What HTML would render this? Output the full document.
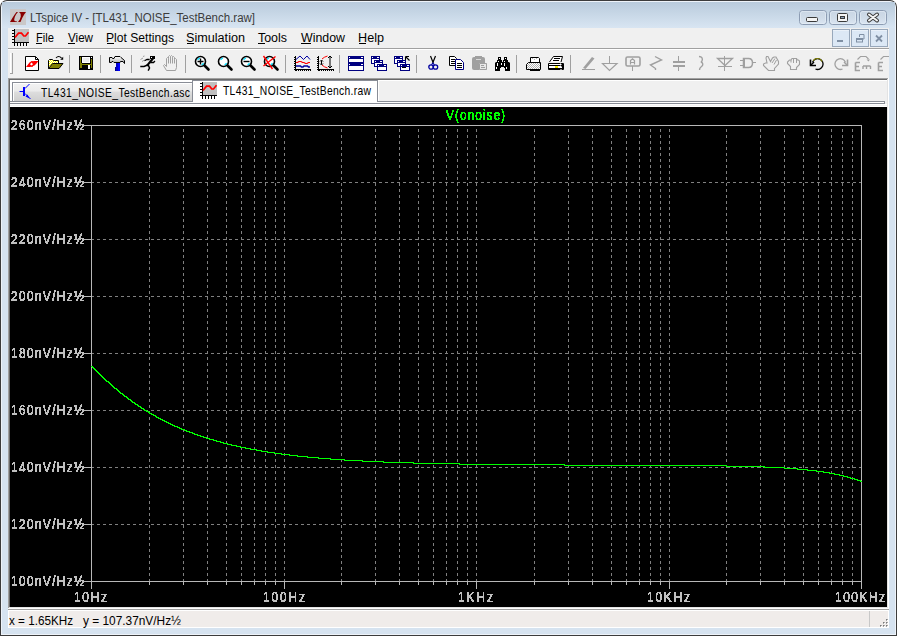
<!DOCTYPE html>
<html><head><meta charset="utf-8"><title>LTspice IV</title>
<style>html,body{margin:0;padding:0;background:#fff;overflow:hidden;width:897px;height:636px}svg{display:block}text{font-family:"Liberation Sans",sans-serif}</style>
</head><body><svg width="897" height="636" viewBox="0 0 897 636"><defs>
<linearGradient id="tg" x1="0" y1="0" x2="0" y2="1"><stop offset="0" stop-color="#b9cbdc"/><stop offset="1" stop-color="#d8e5f2"/></linearGradient>
<linearGradient id="btng" x1="0" y1="0" x2="0" y2="1"><stop offset="0" stop-color="#c9d6e4"/><stop offset="0.5" stop-color="#cfdbe8"/><stop offset="1" stop-color="#dbe6f2"/></linearGradient>
<linearGradient id="tab1g" x1="0" y1="0" x2="0" y2="1"><stop offset="0" stop-color="#f3f3f3"/><stop offset="0.45" stop-color="#ebebeb"/><stop offset="0.5" stop-color="#dddddd"/><stop offset="1" stop-color="#cfcfcf"/></linearGradient>
<filter id="crisp" x="-10%" y="-20%" width="120%" height="140%"><feComponentTransfer><feFuncA type="discrete" tableValues="0 1"/></feComponentTransfer></filter>
<filter id="crisp2" x="-5%" y="-20%" width="110%" height="140%"><feComponentTransfer><feFuncA type="discrete" tableValues="0 0 1 1 1"/></feComponentTransfer></filter>
</defs>
<path d="M0 636 V7 A7 7 0 0 1 7 0 H890 A7 7 0 0 1 897 7 V636 Z" fill="#3c3c3c"/>
<path d="M1 635 V7 A6 6 0 0 1 7 1 H890 A6 6 0 0 1 896 7 V635 Z" fill="#eef3f9"/>
<path d="M2 634 V7 A5 5 0 0 1 7 2 H890 A5 5 0 0 1 895 7 V634 Z" fill="#d6e3f0"/>
<rect x="2" y="2" width="893" height="26" fill="url(#tg)" />
<rect x="10" y="9" width="16" height="16" fill="#cac8c8" />
<path d="M10 22 L13 17 L15 14 L16.5 12 H18 L16 14.5 L14.8 17 L14.2 19.5 L14.6 21 L17 21.5 V22 Z" fill="#880000"/>
<path d="M19 12 H26 L24.2 14.5 L22.5 17.5 L20.5 22 H18 L19.8 19.5 L20.8 16.5 L20.6 13.8 Z" fill="#880000"/>
<text x="30" y="22" font-family="Liberation Sans" font-size="12" font-weight="normal" fill="#3c3c3c" text-anchor="start" textLength="225" lengthAdjust="spacingAndGlyphs" >LTspice IV - [TL431_NOISE_TestBench.raw]</text>
<rect x="799.5" y="10.5" width="27" height="14" rx="3" fill="url(#btng)" stroke="#8c9cb3"/>
<rect x="800.5" y="11.5" width="25" height="12" rx="2" fill="none" stroke="#e6eef7" stroke-opacity="0.6"/>
<rect x="806.5" y="17.5" width="11" height="4" rx="1" fill="#f4f4f4" stroke="#3a3a3a"/>
<rect x="829.5" y="10.5" width="27" height="14" rx="3" fill="url(#btng)" stroke="#8c9cb3"/>
<rect x="830.5" y="11.5" width="25" height="12" rx="2" fill="none" stroke="#e6eef7" stroke-opacity="0.6"/>
<rect x="837.5" y="13.5" width="10" height="8" rx="1" fill="#f4f4f4" stroke="#3a3a3a"/>
<rect x="840.5" y="16.5" width="4" height="2" fill="#8da0b8" stroke="#3a3a3a"/>
<rect x="859.5" y="10.5" width="27" height="14" rx="3" fill="url(#btng)" stroke="#8c9cb3"/>
<rect x="860.5" y="11.5" width="25" height="12" rx="2" fill="none" stroke="#e6eef7" stroke-opacity="0.6"/>
<path d="M869 14.5 L877 20.5 M877 14.5 L869 20.5" stroke="#3a3a3a" stroke-width="4" stroke-linecap="round"/>
<path d="M869 14.5 L877 20.5 M877 14.5 L869 20.5" stroke="#f4f4f4" stroke-width="2" stroke-linecap="round"/>
<rect x="8" y="28" width="881" height="600" fill="#f0f0f0" />
<rect x="15" y="29" width="14" height="13" fill="#c0c0c0" />
<rect x="14" y="29" width="1" height="17" fill="#000" />
<rect x="12" y="30" width="2" height="1" fill="#000" />
<rect x="12" y="33" width="2" height="1" fill="#000" />
<rect x="12" y="36" width="2" height="1" fill="#000" />
<rect x="12" y="39" width="2" height="1" fill="#000" />
<rect x="12" y="42" width="17" height="1" fill="#000" />
<rect x="14" y="43" width="1" height="3" fill="#000" />
<rect x="17" y="43" width="1" height="3" fill="#000" />
<rect x="20" y="43" width="1" height="3" fill="#000" />
<rect x="23" y="43" width="1" height="3" fill="#000" />
<rect x="26" y="43" width="1" height="3" fill="#000" />
<polyline points="15 37.5 18.5 33.2 21.5 33.2 23.8 36 25.5 36 28.5 32.2" fill="none" stroke="#ff0000" stroke-width="1.7"/>
<text x="36" y="42" font-family="Liberation Sans" font-size="12" font-weight="normal" fill="#000" text-anchor="start" textLength="18" lengthAdjust="spacingAndGlyphs" >File</text>
<text x="68" y="42" font-family="Liberation Sans" font-size="12" font-weight="normal" fill="#000" text-anchor="start" textLength="25" lengthAdjust="spacingAndGlyphs" >View</text>
<text x="106" y="42" font-family="Liberation Sans" font-size="12" font-weight="normal" fill="#000" text-anchor="start" textLength="68" lengthAdjust="spacingAndGlyphs" >Plot Settings</text>
<text x="186" y="42" font-family="Liberation Sans" font-size="12" font-weight="normal" fill="#000" text-anchor="start" textLength="59" lengthAdjust="spacingAndGlyphs" >Simulation</text>
<text x="258" y="42" font-family="Liberation Sans" font-size="12" font-weight="normal" fill="#000" text-anchor="start" textLength="29" lengthAdjust="spacingAndGlyphs" >Tools</text>
<text x="301" y="42" font-family="Liberation Sans" font-size="12" font-weight="normal" fill="#000" text-anchor="start" textLength="44" lengthAdjust="spacingAndGlyphs" >Window</text>
<text x="358" y="42" font-family="Liberation Sans" font-size="12" font-weight="normal" fill="#000" text-anchor="start" textLength="26" lengthAdjust="spacingAndGlyphs" >Help</text>
<rect x="36" y="43" width="6" height="1" fill="#000" />
<rect x="68" y="43" width="7" height="1" fill="#000" />
<rect x="107" y="43" width="7" height="1" fill="#000" />
<rect x="187" y="43" width="7" height="1" fill="#000" />
<rect x="258" y="43" width="7" height="1" fill="#000" />
<rect x="301" y="43" width="10" height="1" fill="#000" />
<rect x="359" y="43" width="7" height="1" fill="#000" />
<rect x="832.5" y="29.5" width="17" height="17" fill="#dce8f5" stroke="#98a8bb"/>
<rect x="833" y="30" width="16" height="1" fill="#eaf1f9" />
<rect x="837" y="40" width="6" height="2" fill="#8090a4" />
<rect x="851.5" y="29.5" width="17" height="17" fill="#dce8f5" stroke="#98a8bb"/>
<rect x="852" y="30" width="16" height="1" fill="#eaf1f9" />
<path d="M859.5 37 v-2.5 h4.5 v4.5 h-1.5" fill="none" stroke="#8090a4"/>
<rect x="856.5" y="38.5" width="6" height="3.5" fill="none" stroke="#8090a4"/>
<rect x="856" y="38" width="7" height="2" fill="#8090a4" />
<rect x="870.5" y="29.5" width="17" height="17" fill="#dce8f5" stroke="#98a8bb"/>
<rect x="871" y="30" width="16" height="1" fill="#eaf1f9" />
<path d="M876 35.5 L882 41.5 M882 35.5 L876 41.5" stroke="#8090a4" stroke-width="1.8"/>
<rect x="8" y="48" width="881" height="1" fill="#a0a0a0" />
<rect x="8" y="49" width="881" height="1" fill="#ffffff" />
<rect x="10" y="53" width="1" height="21" fill="#ffffff" />
<rect x="12" y="53" width="1" height="21" fill="#a0a0a0" />
<rect x="10" y="73" width="3" height="1" fill="#a0a0a0" />
<rect x="8" y="78" width="880" height="1" fill="#a0a0a0" />
<rect x="8" y="78" width="1" height="531" fill="#a0a0a0" />
<rect x="9" y="79" width="878" height="1" fill="#696969" />
<rect x="9" y="79" width="1" height="529" fill="#696969" />
<rect x="887" y="79" width="1" height="529" fill="#e3e3e3" />
<rect x="9" y="607" width="879" height="1" fill="#e3e3e3" />
<rect x="888" y="78" width="1" height="531" fill="#ffffff" />
<rect x="8" y="608" width="881" height="1" fill="#ffffff" />
<rect x="10" y="80" width="877" height="27" fill="#f0f0f0" />
<rect x="10" y="101" width="875" height="1" fill="#898d96" />
<rect x="10" y="102" width="874" height="1" fill="#ffffff" />
<rect x="10" y="103" width="875" height="1" fill="#898d96" />
<rect x="884" y="101" width="1" height="3" fill="#898d96" />
<rect x="10" y="104" width="877" height="1" fill="#ffffff" />
<rect x="10" y="105" width="877" height="1" fill="#f4f4f4" />
<rect x="10" y="106" width="877" height="1" fill="#ffffff" />
<rect x="10" y="80" width="182" height="2" fill="#ffffff" />
<rect x="10" y="80" width="2" height="21" fill="#ffffff" />
<rect x="12" y="82" width="181" height="20" fill="#898d96" />
<rect x="13" y="83" width="179" height="18" fill="url(#tab1g)" />
<rect x="13" y="83" width="179" height="1" fill="#ffffff" />
<rect x="13" y="83" width="1" height="18" fill="#ffffff" />
<rect x="193" y="81" width="184" height="22" fill="#ffffff" />
<rect x="192" y="80" width="186" height="1" fill="#898d96" />
<rect x="192" y="80" width="1" height="22" fill="#898d96" />
<rect x="377" y="80" width="1" height="22" fill="#898d96" />
<rect x="378" y="80" width="509" height="1" fill="#ffffff" />
<rect x="378" y="81" width="1" height="20" fill="#ffffff" />
<g stroke="#0000ff" fill="none">
<path d="M19.5 91.5 H24" stroke-width="1"/>
<rect x="23" y="87" width="2" height="9" fill="#0000ff" stroke="none"/>
<path d="M25 88.5 L29.5 84" stroke-width="1"/>
<path d="M25 93.5 L30.5 99" stroke-width="1"/>
</g>
<path d="M29.5 98.5 L25.5 96.5 L27.5 94.5 Z" fill="#0000ff"/>
<g transform="translate(41,97) scale(0.86,1)"><text x="0" y="0" font-family="Liberation Sans" font-size="12" font-weight="normal" fill="#000" text-anchor="start" textLength="173.26" lengthAdjust="spacing" >TL431_NOISE_TestBench.asc</text></g>
<rect x="203" y="82" width="14" height="13" fill="#c0c0c0" />
<rect x="202" y="82" width="1" height="17" fill="#000" />
<rect x="200" y="83" width="2" height="1" fill="#000" />
<rect x="200" y="86" width="2" height="1" fill="#000" />
<rect x="200" y="89" width="2" height="1" fill="#000" />
<rect x="200" y="92" width="2" height="1" fill="#000" />
<rect x="200" y="95" width="17" height="1" fill="#000" />
<rect x="202" y="96" width="1" height="3" fill="#000" />
<rect x="205" y="96" width="1" height="3" fill="#000" />
<rect x="208" y="96" width="1" height="3" fill="#000" />
<rect x="211" y="96" width="1" height="3" fill="#000" />
<rect x="214" y="96" width="1" height="3" fill="#000" />
<polyline points="203 90.5 206.5 86.2 209.5 86.2 211.8 89 213.5 89 216.5 85.2" fill="none" stroke="#ff0000" stroke-width="1.7"/>
<g transform="translate(223,95) scale(0.86,1)"><text x="0" y="0" font-family="Liberation Sans" font-size="12" font-weight="normal" fill="#000" text-anchor="start" textLength="172.09" lengthAdjust="spacing" >TL431_NOISE_TestBench.raw</text></g>
<rect x="10" y="107" width="877" height="500" fill="#000000" />
<path d="M149 129h1v3h-1zM149 135h1v3h-1zM149 141h1v3h-1zM149 147h1v3h-1zM149 153h1v3h-1zM149 159h1v3h-1zM149 165h1v3h-1zM149 171h1v3h-1zM149 177h1v3h-1zM149 183h1v3h-1zM149 189h1v3h-1zM149 195h1v3h-1zM149 201h1v3h-1zM149 207h1v3h-1zM149 213h1v3h-1zM149 219h1v3h-1zM149 225h1v3h-1zM149 231h1v3h-1zM149 237h1v3h-1zM149 243h1v3h-1zM149 249h1v3h-1zM149 255h1v3h-1zM149 261h1v3h-1zM149 267h1v3h-1zM149 273h1v3h-1zM149 279h1v3h-1zM149 285h1v3h-1zM149 291h1v3h-1zM149 297h1v3h-1zM149 303h1v3h-1zM149 309h1v3h-1zM149 315h1v3h-1zM149 321h1v3h-1zM149 327h1v3h-1zM149 333h1v3h-1zM149 339h1v3h-1zM149 345h1v3h-1zM149 351h1v3h-1zM149 357h1v3h-1zM149 363h1v3h-1zM149 369h1v3h-1zM149 375h1v3h-1zM149 381h1v3h-1zM149 387h1v3h-1zM149 393h1v3h-1zM149 399h1v3h-1zM149 405h1v3h-1zM149 411h1v3h-1zM149 417h1v3h-1zM149 423h1v3h-1zM149 429h1v3h-1zM149 435h1v3h-1zM149 441h1v3h-1zM149 447h1v3h-1zM149 453h1v3h-1zM149 459h1v3h-1zM149 465h1v3h-1zM149 471h1v3h-1zM149 477h1v3h-1zM149 483h1v3h-1zM149 489h1v3h-1zM149 495h1v3h-1zM149 501h1v3h-1zM149 507h1v3h-1zM149 513h1v3h-1zM149 519h1v3h-1zM149 525h1v3h-1zM149 531h1v3h-1zM149 537h1v3h-1zM149 543h1v3h-1zM149 549h1v3h-1zM149 555h1v3h-1zM149 561h1v3h-1zM149 567h1v3h-1zM149 573h1v3h-1zM149 579h1v2h-1zM183 129h1v3h-1zM183 135h1v3h-1zM183 141h1v3h-1zM183 147h1v3h-1zM183 153h1v3h-1zM183 159h1v3h-1zM183 165h1v3h-1zM183 171h1v3h-1zM183 177h1v3h-1zM183 183h1v3h-1zM183 189h1v3h-1zM183 195h1v3h-1zM183 201h1v3h-1zM183 207h1v3h-1zM183 213h1v3h-1zM183 219h1v3h-1zM183 225h1v3h-1zM183 231h1v3h-1zM183 237h1v3h-1zM183 243h1v3h-1zM183 249h1v3h-1zM183 255h1v3h-1zM183 261h1v3h-1zM183 267h1v3h-1zM183 273h1v3h-1zM183 279h1v3h-1zM183 285h1v3h-1zM183 291h1v3h-1zM183 297h1v3h-1zM183 303h1v3h-1zM183 309h1v3h-1zM183 315h1v3h-1zM183 321h1v3h-1zM183 327h1v3h-1zM183 333h1v3h-1zM183 339h1v3h-1zM183 345h1v3h-1zM183 351h1v3h-1zM183 357h1v3h-1zM183 363h1v3h-1zM183 369h1v3h-1zM183 375h1v3h-1zM183 381h1v3h-1zM183 387h1v3h-1zM183 393h1v3h-1zM183 399h1v3h-1zM183 405h1v3h-1zM183 411h1v3h-1zM183 417h1v3h-1zM183 423h1v3h-1zM183 429h1v3h-1zM183 435h1v3h-1zM183 441h1v3h-1zM183 447h1v3h-1zM183 453h1v3h-1zM183 459h1v3h-1zM183 465h1v3h-1zM183 471h1v3h-1zM183 477h1v3h-1zM183 483h1v3h-1zM183 489h1v3h-1zM183 495h1v3h-1zM183 501h1v3h-1zM183 507h1v3h-1zM183 513h1v3h-1zM183 519h1v3h-1zM183 525h1v3h-1zM183 531h1v3h-1zM183 537h1v3h-1zM183 543h1v3h-1zM183 549h1v3h-1zM183 555h1v3h-1zM183 561h1v3h-1zM183 567h1v3h-1zM183 573h1v3h-1zM183 579h1v2h-1zM207 129h1v3h-1zM207 135h1v3h-1zM207 141h1v3h-1zM207 147h1v3h-1zM207 153h1v3h-1zM207 159h1v3h-1zM207 165h1v3h-1zM207 171h1v3h-1zM207 177h1v3h-1zM207 183h1v3h-1zM207 189h1v3h-1zM207 195h1v3h-1zM207 201h1v3h-1zM207 207h1v3h-1zM207 213h1v3h-1zM207 219h1v3h-1zM207 225h1v3h-1zM207 231h1v3h-1zM207 237h1v3h-1zM207 243h1v3h-1zM207 249h1v3h-1zM207 255h1v3h-1zM207 261h1v3h-1zM207 267h1v3h-1zM207 273h1v3h-1zM207 279h1v3h-1zM207 285h1v3h-1zM207 291h1v3h-1zM207 297h1v3h-1zM207 303h1v3h-1zM207 309h1v3h-1zM207 315h1v3h-1zM207 321h1v3h-1zM207 327h1v3h-1zM207 333h1v3h-1zM207 339h1v3h-1zM207 345h1v3h-1zM207 351h1v3h-1zM207 357h1v3h-1zM207 363h1v3h-1zM207 369h1v3h-1zM207 375h1v3h-1zM207 381h1v3h-1zM207 387h1v3h-1zM207 393h1v3h-1zM207 399h1v3h-1zM207 405h1v3h-1zM207 411h1v3h-1zM207 417h1v3h-1zM207 423h1v3h-1zM207 429h1v3h-1zM207 435h1v3h-1zM207 441h1v3h-1zM207 447h1v3h-1zM207 453h1v3h-1zM207 459h1v3h-1zM207 465h1v3h-1zM207 471h1v3h-1zM207 477h1v3h-1zM207 483h1v3h-1zM207 489h1v3h-1zM207 495h1v3h-1zM207 501h1v3h-1zM207 507h1v3h-1zM207 513h1v3h-1zM207 519h1v3h-1zM207 525h1v3h-1zM207 531h1v3h-1zM207 537h1v3h-1zM207 543h1v3h-1zM207 549h1v3h-1zM207 555h1v3h-1zM207 561h1v3h-1zM207 567h1v3h-1zM207 573h1v3h-1zM207 579h1v2h-1zM226 129h1v3h-1zM226 135h1v3h-1zM226 141h1v3h-1zM226 147h1v3h-1zM226 153h1v3h-1zM226 159h1v3h-1zM226 165h1v3h-1zM226 171h1v3h-1zM226 177h1v3h-1zM226 183h1v3h-1zM226 189h1v3h-1zM226 195h1v3h-1zM226 201h1v3h-1zM226 207h1v3h-1zM226 213h1v3h-1zM226 219h1v3h-1zM226 225h1v3h-1zM226 231h1v3h-1zM226 237h1v3h-1zM226 243h1v3h-1zM226 249h1v3h-1zM226 255h1v3h-1zM226 261h1v3h-1zM226 267h1v3h-1zM226 273h1v3h-1zM226 279h1v3h-1zM226 285h1v3h-1zM226 291h1v3h-1zM226 297h1v3h-1zM226 303h1v3h-1zM226 309h1v3h-1zM226 315h1v3h-1zM226 321h1v3h-1zM226 327h1v3h-1zM226 333h1v3h-1zM226 339h1v3h-1zM226 345h1v3h-1zM226 351h1v3h-1zM226 357h1v3h-1zM226 363h1v3h-1zM226 369h1v3h-1zM226 375h1v3h-1zM226 381h1v3h-1zM226 387h1v3h-1zM226 393h1v3h-1zM226 399h1v3h-1zM226 405h1v3h-1zM226 411h1v3h-1zM226 417h1v3h-1zM226 423h1v3h-1zM226 429h1v3h-1zM226 435h1v3h-1zM226 441h1v3h-1zM226 447h1v3h-1zM226 453h1v3h-1zM226 459h1v3h-1zM226 465h1v3h-1zM226 471h1v3h-1zM226 477h1v3h-1zM226 483h1v3h-1zM226 489h1v3h-1zM226 495h1v3h-1zM226 501h1v3h-1zM226 507h1v3h-1zM226 513h1v3h-1zM226 519h1v3h-1zM226 525h1v3h-1zM226 531h1v3h-1zM226 537h1v3h-1zM226 543h1v3h-1zM226 549h1v3h-1zM226 555h1v3h-1zM226 561h1v3h-1zM226 567h1v3h-1zM226 573h1v3h-1zM226 579h1v2h-1zM241 129h1v3h-1zM241 135h1v3h-1zM241 141h1v3h-1zM241 147h1v3h-1zM241 153h1v3h-1zM241 159h1v3h-1zM241 165h1v3h-1zM241 171h1v3h-1zM241 177h1v3h-1zM241 183h1v3h-1zM241 189h1v3h-1zM241 195h1v3h-1zM241 201h1v3h-1zM241 207h1v3h-1zM241 213h1v3h-1zM241 219h1v3h-1zM241 225h1v3h-1zM241 231h1v3h-1zM241 237h1v3h-1zM241 243h1v3h-1zM241 249h1v3h-1zM241 255h1v3h-1zM241 261h1v3h-1zM241 267h1v3h-1zM241 273h1v3h-1zM241 279h1v3h-1zM241 285h1v3h-1zM241 291h1v3h-1zM241 297h1v3h-1zM241 303h1v3h-1zM241 309h1v3h-1zM241 315h1v3h-1zM241 321h1v3h-1zM241 327h1v3h-1zM241 333h1v3h-1zM241 339h1v3h-1zM241 345h1v3h-1zM241 351h1v3h-1zM241 357h1v3h-1zM241 363h1v3h-1zM241 369h1v3h-1zM241 375h1v3h-1zM241 381h1v3h-1zM241 387h1v3h-1zM241 393h1v3h-1zM241 399h1v3h-1zM241 405h1v3h-1zM241 411h1v3h-1zM241 417h1v3h-1zM241 423h1v3h-1zM241 429h1v3h-1zM241 435h1v3h-1zM241 441h1v3h-1zM241 447h1v3h-1zM241 453h1v3h-1zM241 459h1v3h-1zM241 465h1v3h-1zM241 471h1v3h-1zM241 477h1v3h-1zM241 483h1v3h-1zM241 489h1v3h-1zM241 495h1v3h-1zM241 501h1v3h-1zM241 507h1v3h-1zM241 513h1v3h-1zM241 519h1v3h-1zM241 525h1v3h-1zM241 531h1v3h-1zM241 537h1v3h-1zM241 543h1v3h-1zM241 549h1v3h-1zM241 555h1v3h-1zM241 561h1v3h-1zM241 567h1v3h-1zM241 573h1v3h-1zM241 579h1v2h-1zM254 129h1v3h-1zM254 135h1v3h-1zM254 141h1v3h-1zM254 147h1v3h-1zM254 153h1v3h-1zM254 159h1v3h-1zM254 165h1v3h-1zM254 171h1v3h-1zM254 177h1v3h-1zM254 183h1v3h-1zM254 189h1v3h-1zM254 195h1v3h-1zM254 201h1v3h-1zM254 207h1v3h-1zM254 213h1v3h-1zM254 219h1v3h-1zM254 225h1v3h-1zM254 231h1v3h-1zM254 237h1v3h-1zM254 243h1v3h-1zM254 249h1v3h-1zM254 255h1v3h-1zM254 261h1v3h-1zM254 267h1v3h-1zM254 273h1v3h-1zM254 279h1v3h-1zM254 285h1v3h-1zM254 291h1v3h-1zM254 297h1v3h-1zM254 303h1v3h-1zM254 309h1v3h-1zM254 315h1v3h-1zM254 321h1v3h-1zM254 327h1v3h-1zM254 333h1v3h-1zM254 339h1v3h-1zM254 345h1v3h-1zM254 351h1v3h-1zM254 357h1v3h-1zM254 363h1v3h-1zM254 369h1v3h-1zM254 375h1v3h-1zM254 381h1v3h-1zM254 387h1v3h-1zM254 393h1v3h-1zM254 399h1v3h-1zM254 405h1v3h-1zM254 411h1v3h-1zM254 417h1v3h-1zM254 423h1v3h-1zM254 429h1v3h-1zM254 435h1v3h-1zM254 441h1v3h-1zM254 447h1v3h-1zM254 453h1v3h-1zM254 459h1v3h-1zM254 465h1v3h-1zM254 471h1v3h-1zM254 477h1v3h-1zM254 483h1v3h-1zM254 489h1v3h-1zM254 495h1v3h-1zM254 501h1v3h-1zM254 507h1v3h-1zM254 513h1v3h-1zM254 519h1v3h-1zM254 525h1v3h-1zM254 531h1v3h-1zM254 537h1v3h-1zM254 543h1v3h-1zM254 549h1v3h-1zM254 555h1v3h-1zM254 561h1v3h-1zM254 567h1v3h-1zM254 573h1v3h-1zM254 579h1v2h-1zM265 129h1v3h-1zM265 135h1v3h-1zM265 141h1v3h-1zM265 147h1v3h-1zM265 153h1v3h-1zM265 159h1v3h-1zM265 165h1v3h-1zM265 171h1v3h-1zM265 177h1v3h-1zM265 183h1v3h-1zM265 189h1v3h-1zM265 195h1v3h-1zM265 201h1v3h-1zM265 207h1v3h-1zM265 213h1v3h-1zM265 219h1v3h-1zM265 225h1v3h-1zM265 231h1v3h-1zM265 237h1v3h-1zM265 243h1v3h-1zM265 249h1v3h-1zM265 255h1v3h-1zM265 261h1v3h-1zM265 267h1v3h-1zM265 273h1v3h-1zM265 279h1v3h-1zM265 285h1v3h-1zM265 291h1v3h-1zM265 297h1v3h-1zM265 303h1v3h-1zM265 309h1v3h-1zM265 315h1v3h-1zM265 321h1v3h-1zM265 327h1v3h-1zM265 333h1v3h-1zM265 339h1v3h-1zM265 345h1v3h-1zM265 351h1v3h-1zM265 357h1v3h-1zM265 363h1v3h-1zM265 369h1v3h-1zM265 375h1v3h-1zM265 381h1v3h-1zM265 387h1v3h-1zM265 393h1v3h-1zM265 399h1v3h-1zM265 405h1v3h-1zM265 411h1v3h-1zM265 417h1v3h-1zM265 423h1v3h-1zM265 429h1v3h-1zM265 435h1v3h-1zM265 441h1v3h-1zM265 447h1v3h-1zM265 453h1v3h-1zM265 459h1v3h-1zM265 465h1v3h-1zM265 471h1v3h-1zM265 477h1v3h-1zM265 483h1v3h-1zM265 489h1v3h-1zM265 495h1v3h-1zM265 501h1v3h-1zM265 507h1v3h-1zM265 513h1v3h-1zM265 519h1v3h-1zM265 525h1v3h-1zM265 531h1v3h-1zM265 537h1v3h-1zM265 543h1v3h-1zM265 549h1v3h-1zM265 555h1v3h-1zM265 561h1v3h-1zM265 567h1v3h-1zM265 573h1v3h-1zM265 579h1v2h-1zM275 129h1v3h-1zM275 135h1v3h-1zM275 141h1v3h-1zM275 147h1v3h-1zM275 153h1v3h-1zM275 159h1v3h-1zM275 165h1v3h-1zM275 171h1v3h-1zM275 177h1v3h-1zM275 183h1v3h-1zM275 189h1v3h-1zM275 195h1v3h-1zM275 201h1v3h-1zM275 207h1v3h-1zM275 213h1v3h-1zM275 219h1v3h-1zM275 225h1v3h-1zM275 231h1v3h-1zM275 237h1v3h-1zM275 243h1v3h-1zM275 249h1v3h-1zM275 255h1v3h-1zM275 261h1v3h-1zM275 267h1v3h-1zM275 273h1v3h-1zM275 279h1v3h-1zM275 285h1v3h-1zM275 291h1v3h-1zM275 297h1v3h-1zM275 303h1v3h-1zM275 309h1v3h-1zM275 315h1v3h-1zM275 321h1v3h-1zM275 327h1v3h-1zM275 333h1v3h-1zM275 339h1v3h-1zM275 345h1v3h-1zM275 351h1v3h-1zM275 357h1v3h-1zM275 363h1v3h-1zM275 369h1v3h-1zM275 375h1v3h-1zM275 381h1v3h-1zM275 387h1v3h-1zM275 393h1v3h-1zM275 399h1v3h-1zM275 405h1v3h-1zM275 411h1v3h-1zM275 417h1v3h-1zM275 423h1v3h-1zM275 429h1v3h-1zM275 435h1v3h-1zM275 441h1v3h-1zM275 447h1v3h-1zM275 453h1v3h-1zM275 459h1v3h-1zM275 465h1v3h-1zM275 471h1v3h-1zM275 477h1v3h-1zM275 483h1v3h-1zM275 489h1v3h-1zM275 495h1v3h-1zM275 501h1v3h-1zM275 507h1v3h-1zM275 513h1v3h-1zM275 519h1v3h-1zM275 525h1v3h-1zM275 531h1v3h-1zM275 537h1v3h-1zM275 543h1v3h-1zM275 549h1v3h-1zM275 555h1v3h-1zM275 561h1v3h-1zM275 567h1v3h-1zM275 573h1v3h-1zM275 579h1v2h-1zM341 129h1v3h-1zM341 135h1v3h-1zM341 141h1v3h-1zM341 147h1v3h-1zM341 153h1v3h-1zM341 159h1v3h-1zM341 165h1v3h-1zM341 171h1v3h-1zM341 177h1v3h-1zM341 183h1v3h-1zM341 189h1v3h-1zM341 195h1v3h-1zM341 201h1v3h-1zM341 207h1v3h-1zM341 213h1v3h-1zM341 219h1v3h-1zM341 225h1v3h-1zM341 231h1v3h-1zM341 237h1v3h-1zM341 243h1v3h-1zM341 249h1v3h-1zM341 255h1v3h-1zM341 261h1v3h-1zM341 267h1v3h-1zM341 273h1v3h-1zM341 279h1v3h-1zM341 285h1v3h-1zM341 291h1v3h-1zM341 297h1v3h-1zM341 303h1v3h-1zM341 309h1v3h-1zM341 315h1v3h-1zM341 321h1v3h-1zM341 327h1v3h-1zM341 333h1v3h-1zM341 339h1v3h-1zM341 345h1v3h-1zM341 351h1v3h-1zM341 357h1v3h-1zM341 363h1v3h-1zM341 369h1v3h-1zM341 375h1v3h-1zM341 381h1v3h-1zM341 387h1v3h-1zM341 393h1v3h-1zM341 399h1v3h-1zM341 405h1v3h-1zM341 411h1v3h-1zM341 417h1v3h-1zM341 423h1v3h-1zM341 429h1v3h-1zM341 435h1v3h-1zM341 441h1v3h-1zM341 447h1v3h-1zM341 453h1v3h-1zM341 459h1v3h-1zM341 465h1v3h-1zM341 471h1v3h-1zM341 477h1v3h-1zM341 483h1v3h-1zM341 489h1v3h-1zM341 495h1v3h-1zM341 501h1v3h-1zM341 507h1v3h-1zM341 513h1v3h-1zM341 519h1v3h-1zM341 525h1v3h-1zM341 531h1v3h-1zM341 537h1v3h-1zM341 543h1v3h-1zM341 549h1v3h-1zM341 555h1v3h-1zM341 561h1v3h-1zM341 567h1v3h-1zM341 573h1v3h-1zM341 579h1v2h-1zM375 129h1v3h-1zM375 135h1v3h-1zM375 141h1v3h-1zM375 147h1v3h-1zM375 153h1v3h-1zM375 159h1v3h-1zM375 165h1v3h-1zM375 171h1v3h-1zM375 177h1v3h-1zM375 183h1v3h-1zM375 189h1v3h-1zM375 195h1v3h-1zM375 201h1v3h-1zM375 207h1v3h-1zM375 213h1v3h-1zM375 219h1v3h-1zM375 225h1v3h-1zM375 231h1v3h-1zM375 237h1v3h-1zM375 243h1v3h-1zM375 249h1v3h-1zM375 255h1v3h-1zM375 261h1v3h-1zM375 267h1v3h-1zM375 273h1v3h-1zM375 279h1v3h-1zM375 285h1v3h-1zM375 291h1v3h-1zM375 297h1v3h-1zM375 303h1v3h-1zM375 309h1v3h-1zM375 315h1v3h-1zM375 321h1v3h-1zM375 327h1v3h-1zM375 333h1v3h-1zM375 339h1v3h-1zM375 345h1v3h-1zM375 351h1v3h-1zM375 357h1v3h-1zM375 363h1v3h-1zM375 369h1v3h-1zM375 375h1v3h-1zM375 381h1v3h-1zM375 387h1v3h-1zM375 393h1v3h-1zM375 399h1v3h-1zM375 405h1v3h-1zM375 411h1v3h-1zM375 417h1v3h-1zM375 423h1v3h-1zM375 429h1v3h-1zM375 435h1v3h-1zM375 441h1v3h-1zM375 447h1v3h-1zM375 453h1v3h-1zM375 459h1v3h-1zM375 465h1v3h-1zM375 471h1v3h-1zM375 477h1v3h-1zM375 483h1v3h-1zM375 489h1v3h-1zM375 495h1v3h-1zM375 501h1v3h-1zM375 507h1v3h-1zM375 513h1v3h-1zM375 519h1v3h-1zM375 525h1v3h-1zM375 531h1v3h-1zM375 537h1v3h-1zM375 543h1v3h-1zM375 549h1v3h-1zM375 555h1v3h-1zM375 561h1v3h-1zM375 567h1v3h-1zM375 573h1v3h-1zM375 579h1v2h-1zM399 129h1v3h-1zM399 135h1v3h-1zM399 141h1v3h-1zM399 147h1v3h-1zM399 153h1v3h-1zM399 159h1v3h-1zM399 165h1v3h-1zM399 171h1v3h-1zM399 177h1v3h-1zM399 183h1v3h-1zM399 189h1v3h-1zM399 195h1v3h-1zM399 201h1v3h-1zM399 207h1v3h-1zM399 213h1v3h-1zM399 219h1v3h-1zM399 225h1v3h-1zM399 231h1v3h-1zM399 237h1v3h-1zM399 243h1v3h-1zM399 249h1v3h-1zM399 255h1v3h-1zM399 261h1v3h-1zM399 267h1v3h-1zM399 273h1v3h-1zM399 279h1v3h-1zM399 285h1v3h-1zM399 291h1v3h-1zM399 297h1v3h-1zM399 303h1v3h-1zM399 309h1v3h-1zM399 315h1v3h-1zM399 321h1v3h-1zM399 327h1v3h-1zM399 333h1v3h-1zM399 339h1v3h-1zM399 345h1v3h-1zM399 351h1v3h-1zM399 357h1v3h-1zM399 363h1v3h-1zM399 369h1v3h-1zM399 375h1v3h-1zM399 381h1v3h-1zM399 387h1v3h-1zM399 393h1v3h-1zM399 399h1v3h-1zM399 405h1v3h-1zM399 411h1v3h-1zM399 417h1v3h-1zM399 423h1v3h-1zM399 429h1v3h-1zM399 435h1v3h-1zM399 441h1v3h-1zM399 447h1v3h-1zM399 453h1v3h-1zM399 459h1v3h-1zM399 465h1v3h-1zM399 471h1v3h-1zM399 477h1v3h-1zM399 483h1v3h-1zM399 489h1v3h-1zM399 495h1v3h-1zM399 501h1v3h-1zM399 507h1v3h-1zM399 513h1v3h-1zM399 519h1v3h-1zM399 525h1v3h-1zM399 531h1v3h-1zM399 537h1v3h-1zM399 543h1v3h-1zM399 549h1v3h-1zM399 555h1v3h-1zM399 561h1v3h-1zM399 567h1v3h-1zM399 573h1v3h-1zM399 579h1v2h-1zM418 129h1v3h-1zM418 135h1v3h-1zM418 141h1v3h-1zM418 147h1v3h-1zM418 153h1v3h-1zM418 159h1v3h-1zM418 165h1v3h-1zM418 171h1v3h-1zM418 177h1v3h-1zM418 183h1v3h-1zM418 189h1v3h-1zM418 195h1v3h-1zM418 201h1v3h-1zM418 207h1v3h-1zM418 213h1v3h-1zM418 219h1v3h-1zM418 225h1v3h-1zM418 231h1v3h-1zM418 237h1v3h-1zM418 243h1v3h-1zM418 249h1v3h-1zM418 255h1v3h-1zM418 261h1v3h-1zM418 267h1v3h-1zM418 273h1v3h-1zM418 279h1v3h-1zM418 285h1v3h-1zM418 291h1v3h-1zM418 297h1v3h-1zM418 303h1v3h-1zM418 309h1v3h-1zM418 315h1v3h-1zM418 321h1v3h-1zM418 327h1v3h-1zM418 333h1v3h-1zM418 339h1v3h-1zM418 345h1v3h-1zM418 351h1v3h-1zM418 357h1v3h-1zM418 363h1v3h-1zM418 369h1v3h-1zM418 375h1v3h-1zM418 381h1v3h-1zM418 387h1v3h-1zM418 393h1v3h-1zM418 399h1v3h-1zM418 405h1v3h-1zM418 411h1v3h-1zM418 417h1v3h-1zM418 423h1v3h-1zM418 429h1v3h-1zM418 435h1v3h-1zM418 441h1v3h-1zM418 447h1v3h-1zM418 453h1v3h-1zM418 459h1v3h-1zM418 465h1v3h-1zM418 471h1v3h-1zM418 477h1v3h-1zM418 483h1v3h-1zM418 489h1v3h-1zM418 495h1v3h-1zM418 501h1v3h-1zM418 507h1v3h-1zM418 513h1v3h-1zM418 519h1v3h-1zM418 525h1v3h-1zM418 531h1v3h-1zM418 537h1v3h-1zM418 543h1v3h-1zM418 549h1v3h-1zM418 555h1v3h-1zM418 561h1v3h-1zM418 567h1v3h-1zM418 573h1v3h-1zM418 579h1v2h-1zM433 129h1v3h-1zM433 135h1v3h-1zM433 141h1v3h-1zM433 147h1v3h-1zM433 153h1v3h-1zM433 159h1v3h-1zM433 165h1v3h-1zM433 171h1v3h-1zM433 177h1v3h-1zM433 183h1v3h-1zM433 189h1v3h-1zM433 195h1v3h-1zM433 201h1v3h-1zM433 207h1v3h-1zM433 213h1v3h-1zM433 219h1v3h-1zM433 225h1v3h-1zM433 231h1v3h-1zM433 237h1v3h-1zM433 243h1v3h-1zM433 249h1v3h-1zM433 255h1v3h-1zM433 261h1v3h-1zM433 267h1v3h-1zM433 273h1v3h-1zM433 279h1v3h-1zM433 285h1v3h-1zM433 291h1v3h-1zM433 297h1v3h-1zM433 303h1v3h-1zM433 309h1v3h-1zM433 315h1v3h-1zM433 321h1v3h-1zM433 327h1v3h-1zM433 333h1v3h-1zM433 339h1v3h-1zM433 345h1v3h-1zM433 351h1v3h-1zM433 357h1v3h-1zM433 363h1v3h-1zM433 369h1v3h-1zM433 375h1v3h-1zM433 381h1v3h-1zM433 387h1v3h-1zM433 393h1v3h-1zM433 399h1v3h-1zM433 405h1v3h-1zM433 411h1v3h-1zM433 417h1v3h-1zM433 423h1v3h-1zM433 429h1v3h-1zM433 435h1v3h-1zM433 441h1v3h-1zM433 447h1v3h-1zM433 453h1v3h-1zM433 459h1v3h-1zM433 465h1v3h-1zM433 471h1v3h-1zM433 477h1v3h-1zM433 483h1v3h-1zM433 489h1v3h-1zM433 495h1v3h-1zM433 501h1v3h-1zM433 507h1v3h-1zM433 513h1v3h-1zM433 519h1v3h-1zM433 525h1v3h-1zM433 531h1v3h-1zM433 537h1v3h-1zM433 543h1v3h-1zM433 549h1v3h-1zM433 555h1v3h-1zM433 561h1v3h-1zM433 567h1v3h-1zM433 573h1v3h-1zM433 579h1v2h-1zM446 129h1v3h-1zM446 135h1v3h-1zM446 141h1v3h-1zM446 147h1v3h-1zM446 153h1v3h-1zM446 159h1v3h-1zM446 165h1v3h-1zM446 171h1v3h-1zM446 177h1v3h-1zM446 183h1v3h-1zM446 189h1v3h-1zM446 195h1v3h-1zM446 201h1v3h-1zM446 207h1v3h-1zM446 213h1v3h-1zM446 219h1v3h-1zM446 225h1v3h-1zM446 231h1v3h-1zM446 237h1v3h-1zM446 243h1v3h-1zM446 249h1v3h-1zM446 255h1v3h-1zM446 261h1v3h-1zM446 267h1v3h-1zM446 273h1v3h-1zM446 279h1v3h-1zM446 285h1v3h-1zM446 291h1v3h-1zM446 297h1v3h-1zM446 303h1v3h-1zM446 309h1v3h-1zM446 315h1v3h-1zM446 321h1v3h-1zM446 327h1v3h-1zM446 333h1v3h-1zM446 339h1v3h-1zM446 345h1v3h-1zM446 351h1v3h-1zM446 357h1v3h-1zM446 363h1v3h-1zM446 369h1v3h-1zM446 375h1v3h-1zM446 381h1v3h-1zM446 387h1v3h-1zM446 393h1v3h-1zM446 399h1v3h-1zM446 405h1v3h-1zM446 411h1v3h-1zM446 417h1v3h-1zM446 423h1v3h-1zM446 429h1v3h-1zM446 435h1v3h-1zM446 441h1v3h-1zM446 447h1v3h-1zM446 453h1v3h-1zM446 459h1v3h-1zM446 465h1v3h-1zM446 471h1v3h-1zM446 477h1v3h-1zM446 483h1v3h-1zM446 489h1v3h-1zM446 495h1v3h-1zM446 501h1v3h-1zM446 507h1v3h-1zM446 513h1v3h-1zM446 519h1v3h-1zM446 525h1v3h-1zM446 531h1v3h-1zM446 537h1v3h-1zM446 543h1v3h-1zM446 549h1v3h-1zM446 555h1v3h-1zM446 561h1v3h-1zM446 567h1v3h-1zM446 573h1v3h-1zM446 579h1v2h-1zM457 129h1v3h-1zM457 135h1v3h-1zM457 141h1v3h-1zM457 147h1v3h-1zM457 153h1v3h-1zM457 159h1v3h-1zM457 165h1v3h-1zM457 171h1v3h-1zM457 177h1v3h-1zM457 183h1v3h-1zM457 189h1v3h-1zM457 195h1v3h-1zM457 201h1v3h-1zM457 207h1v3h-1zM457 213h1v3h-1zM457 219h1v3h-1zM457 225h1v3h-1zM457 231h1v3h-1zM457 237h1v3h-1zM457 243h1v3h-1zM457 249h1v3h-1zM457 255h1v3h-1zM457 261h1v3h-1zM457 267h1v3h-1zM457 273h1v3h-1zM457 279h1v3h-1zM457 285h1v3h-1zM457 291h1v3h-1zM457 297h1v3h-1zM457 303h1v3h-1zM457 309h1v3h-1zM457 315h1v3h-1zM457 321h1v3h-1zM457 327h1v3h-1zM457 333h1v3h-1zM457 339h1v3h-1zM457 345h1v3h-1zM457 351h1v3h-1zM457 357h1v3h-1zM457 363h1v3h-1zM457 369h1v3h-1zM457 375h1v3h-1zM457 381h1v3h-1zM457 387h1v3h-1zM457 393h1v3h-1zM457 399h1v3h-1zM457 405h1v3h-1zM457 411h1v3h-1zM457 417h1v3h-1zM457 423h1v3h-1zM457 429h1v3h-1zM457 435h1v3h-1zM457 441h1v3h-1zM457 447h1v3h-1zM457 453h1v3h-1zM457 459h1v3h-1zM457 465h1v3h-1zM457 471h1v3h-1zM457 477h1v3h-1zM457 483h1v3h-1zM457 489h1v3h-1zM457 495h1v3h-1zM457 501h1v3h-1zM457 507h1v3h-1zM457 513h1v3h-1zM457 519h1v3h-1zM457 525h1v3h-1zM457 531h1v3h-1zM457 537h1v3h-1zM457 543h1v3h-1zM457 549h1v3h-1zM457 555h1v3h-1zM457 561h1v3h-1zM457 567h1v3h-1zM457 573h1v3h-1zM457 579h1v2h-1zM467 129h1v3h-1zM467 135h1v3h-1zM467 141h1v3h-1zM467 147h1v3h-1zM467 153h1v3h-1zM467 159h1v3h-1zM467 165h1v3h-1zM467 171h1v3h-1zM467 177h1v3h-1zM467 183h1v3h-1zM467 189h1v3h-1zM467 195h1v3h-1zM467 201h1v3h-1zM467 207h1v3h-1zM467 213h1v3h-1zM467 219h1v3h-1zM467 225h1v3h-1zM467 231h1v3h-1zM467 237h1v3h-1zM467 243h1v3h-1zM467 249h1v3h-1zM467 255h1v3h-1zM467 261h1v3h-1zM467 267h1v3h-1zM467 273h1v3h-1zM467 279h1v3h-1zM467 285h1v3h-1zM467 291h1v3h-1zM467 297h1v3h-1zM467 303h1v3h-1zM467 309h1v3h-1zM467 315h1v3h-1zM467 321h1v3h-1zM467 327h1v3h-1zM467 333h1v3h-1zM467 339h1v3h-1zM467 345h1v3h-1zM467 351h1v3h-1zM467 357h1v3h-1zM467 363h1v3h-1zM467 369h1v3h-1zM467 375h1v3h-1zM467 381h1v3h-1zM467 387h1v3h-1zM467 393h1v3h-1zM467 399h1v3h-1zM467 405h1v3h-1zM467 411h1v3h-1zM467 417h1v3h-1zM467 423h1v3h-1zM467 429h1v3h-1zM467 435h1v3h-1zM467 441h1v3h-1zM467 447h1v3h-1zM467 453h1v3h-1zM467 459h1v3h-1zM467 465h1v3h-1zM467 471h1v3h-1zM467 477h1v3h-1zM467 483h1v3h-1zM467 489h1v3h-1zM467 495h1v3h-1zM467 501h1v3h-1zM467 507h1v3h-1zM467 513h1v3h-1zM467 519h1v3h-1zM467 525h1v3h-1zM467 531h1v3h-1zM467 537h1v3h-1zM467 543h1v3h-1zM467 549h1v3h-1zM467 555h1v3h-1zM467 561h1v3h-1zM467 567h1v3h-1zM467 573h1v3h-1zM467 579h1v2h-1zM534 129h1v3h-1zM534 135h1v3h-1zM534 141h1v3h-1zM534 147h1v3h-1zM534 153h1v3h-1zM534 159h1v3h-1zM534 165h1v3h-1zM534 171h1v3h-1zM534 177h1v3h-1zM534 183h1v3h-1zM534 189h1v3h-1zM534 195h1v3h-1zM534 201h1v3h-1zM534 207h1v3h-1zM534 213h1v3h-1zM534 219h1v3h-1zM534 225h1v3h-1zM534 231h1v3h-1zM534 237h1v3h-1zM534 243h1v3h-1zM534 249h1v3h-1zM534 255h1v3h-1zM534 261h1v3h-1zM534 267h1v3h-1zM534 273h1v3h-1zM534 279h1v3h-1zM534 285h1v3h-1zM534 291h1v3h-1zM534 297h1v3h-1zM534 303h1v3h-1zM534 309h1v3h-1zM534 315h1v3h-1zM534 321h1v3h-1zM534 327h1v3h-1zM534 333h1v3h-1zM534 339h1v3h-1zM534 345h1v3h-1zM534 351h1v3h-1zM534 357h1v3h-1zM534 363h1v3h-1zM534 369h1v3h-1zM534 375h1v3h-1zM534 381h1v3h-1zM534 387h1v3h-1zM534 393h1v3h-1zM534 399h1v3h-1zM534 405h1v3h-1zM534 411h1v3h-1zM534 417h1v3h-1zM534 423h1v3h-1zM534 429h1v3h-1zM534 435h1v3h-1zM534 441h1v3h-1zM534 447h1v3h-1zM534 453h1v3h-1zM534 459h1v3h-1zM534 465h1v3h-1zM534 471h1v3h-1zM534 477h1v3h-1zM534 483h1v3h-1zM534 489h1v3h-1zM534 495h1v3h-1zM534 501h1v3h-1zM534 507h1v3h-1zM534 513h1v3h-1zM534 519h1v3h-1zM534 525h1v3h-1zM534 531h1v3h-1zM534 537h1v3h-1zM534 543h1v3h-1zM534 549h1v3h-1zM534 555h1v3h-1zM534 561h1v3h-1zM534 567h1v3h-1zM534 573h1v3h-1zM534 579h1v2h-1zM568 129h1v3h-1zM568 135h1v3h-1zM568 141h1v3h-1zM568 147h1v3h-1zM568 153h1v3h-1zM568 159h1v3h-1zM568 165h1v3h-1zM568 171h1v3h-1zM568 177h1v3h-1zM568 183h1v3h-1zM568 189h1v3h-1zM568 195h1v3h-1zM568 201h1v3h-1zM568 207h1v3h-1zM568 213h1v3h-1zM568 219h1v3h-1zM568 225h1v3h-1zM568 231h1v3h-1zM568 237h1v3h-1zM568 243h1v3h-1zM568 249h1v3h-1zM568 255h1v3h-1zM568 261h1v3h-1zM568 267h1v3h-1zM568 273h1v3h-1zM568 279h1v3h-1zM568 285h1v3h-1zM568 291h1v3h-1zM568 297h1v3h-1zM568 303h1v3h-1zM568 309h1v3h-1zM568 315h1v3h-1zM568 321h1v3h-1zM568 327h1v3h-1zM568 333h1v3h-1zM568 339h1v3h-1zM568 345h1v3h-1zM568 351h1v3h-1zM568 357h1v3h-1zM568 363h1v3h-1zM568 369h1v3h-1zM568 375h1v3h-1zM568 381h1v3h-1zM568 387h1v3h-1zM568 393h1v3h-1zM568 399h1v3h-1zM568 405h1v3h-1zM568 411h1v3h-1zM568 417h1v3h-1zM568 423h1v3h-1zM568 429h1v3h-1zM568 435h1v3h-1zM568 441h1v3h-1zM568 447h1v3h-1zM568 453h1v3h-1zM568 459h1v3h-1zM568 465h1v3h-1zM568 471h1v3h-1zM568 477h1v3h-1zM568 483h1v3h-1zM568 489h1v3h-1zM568 495h1v3h-1zM568 501h1v3h-1zM568 507h1v3h-1zM568 513h1v3h-1zM568 519h1v3h-1zM568 525h1v3h-1zM568 531h1v3h-1zM568 537h1v3h-1zM568 543h1v3h-1zM568 549h1v3h-1zM568 555h1v3h-1zM568 561h1v3h-1zM568 567h1v3h-1zM568 573h1v3h-1zM568 579h1v2h-1zM592 129h1v3h-1zM592 135h1v3h-1zM592 141h1v3h-1zM592 147h1v3h-1zM592 153h1v3h-1zM592 159h1v3h-1zM592 165h1v3h-1zM592 171h1v3h-1zM592 177h1v3h-1zM592 183h1v3h-1zM592 189h1v3h-1zM592 195h1v3h-1zM592 201h1v3h-1zM592 207h1v3h-1zM592 213h1v3h-1zM592 219h1v3h-1zM592 225h1v3h-1zM592 231h1v3h-1zM592 237h1v3h-1zM592 243h1v3h-1zM592 249h1v3h-1zM592 255h1v3h-1zM592 261h1v3h-1zM592 267h1v3h-1zM592 273h1v3h-1zM592 279h1v3h-1zM592 285h1v3h-1zM592 291h1v3h-1zM592 297h1v3h-1zM592 303h1v3h-1zM592 309h1v3h-1zM592 315h1v3h-1zM592 321h1v3h-1zM592 327h1v3h-1zM592 333h1v3h-1zM592 339h1v3h-1zM592 345h1v3h-1zM592 351h1v3h-1zM592 357h1v3h-1zM592 363h1v3h-1zM592 369h1v3h-1zM592 375h1v3h-1zM592 381h1v3h-1zM592 387h1v3h-1zM592 393h1v3h-1zM592 399h1v3h-1zM592 405h1v3h-1zM592 411h1v3h-1zM592 417h1v3h-1zM592 423h1v3h-1zM592 429h1v3h-1zM592 435h1v3h-1zM592 441h1v3h-1zM592 447h1v3h-1zM592 453h1v3h-1zM592 459h1v3h-1zM592 465h1v3h-1zM592 471h1v3h-1zM592 477h1v3h-1zM592 483h1v3h-1zM592 489h1v3h-1zM592 495h1v3h-1zM592 501h1v3h-1zM592 507h1v3h-1zM592 513h1v3h-1zM592 519h1v3h-1zM592 525h1v3h-1zM592 531h1v3h-1zM592 537h1v3h-1zM592 543h1v3h-1zM592 549h1v3h-1zM592 555h1v3h-1zM592 561h1v3h-1zM592 567h1v3h-1zM592 573h1v3h-1zM592 579h1v2h-1zM611 129h1v3h-1zM611 135h1v3h-1zM611 141h1v3h-1zM611 147h1v3h-1zM611 153h1v3h-1zM611 159h1v3h-1zM611 165h1v3h-1zM611 171h1v3h-1zM611 177h1v3h-1zM611 183h1v3h-1zM611 189h1v3h-1zM611 195h1v3h-1zM611 201h1v3h-1zM611 207h1v3h-1zM611 213h1v3h-1zM611 219h1v3h-1zM611 225h1v3h-1zM611 231h1v3h-1zM611 237h1v3h-1zM611 243h1v3h-1zM611 249h1v3h-1zM611 255h1v3h-1zM611 261h1v3h-1zM611 267h1v3h-1zM611 273h1v3h-1zM611 279h1v3h-1zM611 285h1v3h-1zM611 291h1v3h-1zM611 297h1v3h-1zM611 303h1v3h-1zM611 309h1v3h-1zM611 315h1v3h-1zM611 321h1v3h-1zM611 327h1v3h-1zM611 333h1v3h-1zM611 339h1v3h-1zM611 345h1v3h-1zM611 351h1v3h-1zM611 357h1v3h-1zM611 363h1v3h-1zM611 369h1v3h-1zM611 375h1v3h-1zM611 381h1v3h-1zM611 387h1v3h-1zM611 393h1v3h-1zM611 399h1v3h-1zM611 405h1v3h-1zM611 411h1v3h-1zM611 417h1v3h-1zM611 423h1v3h-1zM611 429h1v3h-1zM611 435h1v3h-1zM611 441h1v3h-1zM611 447h1v3h-1zM611 453h1v3h-1zM611 459h1v3h-1zM611 465h1v3h-1zM611 471h1v3h-1zM611 477h1v3h-1zM611 483h1v3h-1zM611 489h1v3h-1zM611 495h1v3h-1zM611 501h1v3h-1zM611 507h1v3h-1zM611 513h1v3h-1zM611 519h1v3h-1zM611 525h1v3h-1zM611 531h1v3h-1zM611 537h1v3h-1zM611 543h1v3h-1zM611 549h1v3h-1zM611 555h1v3h-1zM611 561h1v3h-1zM611 567h1v3h-1zM611 573h1v3h-1zM611 579h1v2h-1zM626 129h1v3h-1zM626 135h1v3h-1zM626 141h1v3h-1zM626 147h1v3h-1zM626 153h1v3h-1zM626 159h1v3h-1zM626 165h1v3h-1zM626 171h1v3h-1zM626 177h1v3h-1zM626 183h1v3h-1zM626 189h1v3h-1zM626 195h1v3h-1zM626 201h1v3h-1zM626 207h1v3h-1zM626 213h1v3h-1zM626 219h1v3h-1zM626 225h1v3h-1zM626 231h1v3h-1zM626 237h1v3h-1zM626 243h1v3h-1zM626 249h1v3h-1zM626 255h1v3h-1zM626 261h1v3h-1zM626 267h1v3h-1zM626 273h1v3h-1zM626 279h1v3h-1zM626 285h1v3h-1zM626 291h1v3h-1zM626 297h1v3h-1zM626 303h1v3h-1zM626 309h1v3h-1zM626 315h1v3h-1zM626 321h1v3h-1zM626 327h1v3h-1zM626 333h1v3h-1zM626 339h1v3h-1zM626 345h1v3h-1zM626 351h1v3h-1zM626 357h1v3h-1zM626 363h1v3h-1zM626 369h1v3h-1zM626 375h1v3h-1zM626 381h1v3h-1zM626 387h1v3h-1zM626 393h1v3h-1zM626 399h1v3h-1zM626 405h1v3h-1zM626 411h1v3h-1zM626 417h1v3h-1zM626 423h1v3h-1zM626 429h1v3h-1zM626 435h1v3h-1zM626 441h1v3h-1zM626 447h1v3h-1zM626 453h1v3h-1zM626 459h1v3h-1zM626 465h1v3h-1zM626 471h1v3h-1zM626 477h1v3h-1zM626 483h1v3h-1zM626 489h1v3h-1zM626 495h1v3h-1zM626 501h1v3h-1zM626 507h1v3h-1zM626 513h1v3h-1zM626 519h1v3h-1zM626 525h1v3h-1zM626 531h1v3h-1zM626 537h1v3h-1zM626 543h1v3h-1zM626 549h1v3h-1zM626 555h1v3h-1zM626 561h1v3h-1zM626 567h1v3h-1zM626 573h1v3h-1zM626 579h1v2h-1zM639 129h1v3h-1zM639 135h1v3h-1zM639 141h1v3h-1zM639 147h1v3h-1zM639 153h1v3h-1zM639 159h1v3h-1zM639 165h1v3h-1zM639 171h1v3h-1zM639 177h1v3h-1zM639 183h1v3h-1zM639 189h1v3h-1zM639 195h1v3h-1zM639 201h1v3h-1zM639 207h1v3h-1zM639 213h1v3h-1zM639 219h1v3h-1zM639 225h1v3h-1zM639 231h1v3h-1zM639 237h1v3h-1zM639 243h1v3h-1zM639 249h1v3h-1zM639 255h1v3h-1zM639 261h1v3h-1zM639 267h1v3h-1zM639 273h1v3h-1zM639 279h1v3h-1zM639 285h1v3h-1zM639 291h1v3h-1zM639 297h1v3h-1zM639 303h1v3h-1zM639 309h1v3h-1zM639 315h1v3h-1zM639 321h1v3h-1zM639 327h1v3h-1zM639 333h1v3h-1zM639 339h1v3h-1zM639 345h1v3h-1zM639 351h1v3h-1zM639 357h1v3h-1zM639 363h1v3h-1zM639 369h1v3h-1zM639 375h1v3h-1zM639 381h1v3h-1zM639 387h1v3h-1zM639 393h1v3h-1zM639 399h1v3h-1zM639 405h1v3h-1zM639 411h1v3h-1zM639 417h1v3h-1zM639 423h1v3h-1zM639 429h1v3h-1zM639 435h1v3h-1zM639 441h1v3h-1zM639 447h1v3h-1zM639 453h1v3h-1zM639 459h1v3h-1zM639 465h1v3h-1zM639 471h1v3h-1zM639 477h1v3h-1zM639 483h1v3h-1zM639 489h1v3h-1zM639 495h1v3h-1zM639 501h1v3h-1zM639 507h1v3h-1zM639 513h1v3h-1zM639 519h1v3h-1zM639 525h1v3h-1zM639 531h1v3h-1zM639 537h1v3h-1zM639 543h1v3h-1zM639 549h1v3h-1zM639 555h1v3h-1zM639 561h1v3h-1zM639 567h1v3h-1zM639 573h1v3h-1zM639 579h1v2h-1zM650 129h1v3h-1zM650 135h1v3h-1zM650 141h1v3h-1zM650 147h1v3h-1zM650 153h1v3h-1zM650 159h1v3h-1zM650 165h1v3h-1zM650 171h1v3h-1zM650 177h1v3h-1zM650 183h1v3h-1zM650 189h1v3h-1zM650 195h1v3h-1zM650 201h1v3h-1zM650 207h1v3h-1zM650 213h1v3h-1zM650 219h1v3h-1zM650 225h1v3h-1zM650 231h1v3h-1zM650 237h1v3h-1zM650 243h1v3h-1zM650 249h1v3h-1zM650 255h1v3h-1zM650 261h1v3h-1zM650 267h1v3h-1zM650 273h1v3h-1zM650 279h1v3h-1zM650 285h1v3h-1zM650 291h1v3h-1zM650 297h1v3h-1zM650 303h1v3h-1zM650 309h1v3h-1zM650 315h1v3h-1zM650 321h1v3h-1zM650 327h1v3h-1zM650 333h1v3h-1zM650 339h1v3h-1zM650 345h1v3h-1zM650 351h1v3h-1zM650 357h1v3h-1zM650 363h1v3h-1zM650 369h1v3h-1zM650 375h1v3h-1zM650 381h1v3h-1zM650 387h1v3h-1zM650 393h1v3h-1zM650 399h1v3h-1zM650 405h1v3h-1zM650 411h1v3h-1zM650 417h1v3h-1zM650 423h1v3h-1zM650 429h1v3h-1zM650 435h1v3h-1zM650 441h1v3h-1zM650 447h1v3h-1zM650 453h1v3h-1zM650 459h1v3h-1zM650 465h1v3h-1zM650 471h1v3h-1zM650 477h1v3h-1zM650 483h1v3h-1zM650 489h1v3h-1zM650 495h1v3h-1zM650 501h1v3h-1zM650 507h1v3h-1zM650 513h1v3h-1zM650 519h1v3h-1zM650 525h1v3h-1zM650 531h1v3h-1zM650 537h1v3h-1zM650 543h1v3h-1zM650 549h1v3h-1zM650 555h1v3h-1zM650 561h1v3h-1zM650 567h1v3h-1zM650 573h1v3h-1zM650 579h1v2h-1zM660 129h1v3h-1zM660 135h1v3h-1zM660 141h1v3h-1zM660 147h1v3h-1zM660 153h1v3h-1zM660 159h1v3h-1zM660 165h1v3h-1zM660 171h1v3h-1zM660 177h1v3h-1zM660 183h1v3h-1zM660 189h1v3h-1zM660 195h1v3h-1zM660 201h1v3h-1zM660 207h1v3h-1zM660 213h1v3h-1zM660 219h1v3h-1zM660 225h1v3h-1zM660 231h1v3h-1zM660 237h1v3h-1zM660 243h1v3h-1zM660 249h1v3h-1zM660 255h1v3h-1zM660 261h1v3h-1zM660 267h1v3h-1zM660 273h1v3h-1zM660 279h1v3h-1zM660 285h1v3h-1zM660 291h1v3h-1zM660 297h1v3h-1zM660 303h1v3h-1zM660 309h1v3h-1zM660 315h1v3h-1zM660 321h1v3h-1zM660 327h1v3h-1zM660 333h1v3h-1zM660 339h1v3h-1zM660 345h1v3h-1zM660 351h1v3h-1zM660 357h1v3h-1zM660 363h1v3h-1zM660 369h1v3h-1zM660 375h1v3h-1zM660 381h1v3h-1zM660 387h1v3h-1zM660 393h1v3h-1zM660 399h1v3h-1zM660 405h1v3h-1zM660 411h1v3h-1zM660 417h1v3h-1zM660 423h1v3h-1zM660 429h1v3h-1zM660 435h1v3h-1zM660 441h1v3h-1zM660 447h1v3h-1zM660 453h1v3h-1zM660 459h1v3h-1zM660 465h1v3h-1zM660 471h1v3h-1zM660 477h1v3h-1zM660 483h1v3h-1zM660 489h1v3h-1zM660 495h1v3h-1zM660 501h1v3h-1zM660 507h1v3h-1zM660 513h1v3h-1zM660 519h1v3h-1zM660 525h1v3h-1zM660 531h1v3h-1zM660 537h1v3h-1zM660 543h1v3h-1zM660 549h1v3h-1zM660 555h1v3h-1zM660 561h1v3h-1zM660 567h1v3h-1zM660 573h1v3h-1zM660 579h1v2h-1zM726 129h1v3h-1zM726 135h1v3h-1zM726 141h1v3h-1zM726 147h1v3h-1zM726 153h1v3h-1zM726 159h1v3h-1zM726 165h1v3h-1zM726 171h1v3h-1zM726 177h1v3h-1zM726 183h1v3h-1zM726 189h1v3h-1zM726 195h1v3h-1zM726 201h1v3h-1zM726 207h1v3h-1zM726 213h1v3h-1zM726 219h1v3h-1zM726 225h1v3h-1zM726 231h1v3h-1zM726 237h1v3h-1zM726 243h1v3h-1zM726 249h1v3h-1zM726 255h1v3h-1zM726 261h1v3h-1zM726 267h1v3h-1zM726 273h1v3h-1zM726 279h1v3h-1zM726 285h1v3h-1zM726 291h1v3h-1zM726 297h1v3h-1zM726 303h1v3h-1zM726 309h1v3h-1zM726 315h1v3h-1zM726 321h1v3h-1zM726 327h1v3h-1zM726 333h1v3h-1zM726 339h1v3h-1zM726 345h1v3h-1zM726 351h1v3h-1zM726 357h1v3h-1zM726 363h1v3h-1zM726 369h1v3h-1zM726 375h1v3h-1zM726 381h1v3h-1zM726 387h1v3h-1zM726 393h1v3h-1zM726 399h1v3h-1zM726 405h1v3h-1zM726 411h1v3h-1zM726 417h1v3h-1zM726 423h1v3h-1zM726 429h1v3h-1zM726 435h1v3h-1zM726 441h1v3h-1zM726 447h1v3h-1zM726 453h1v3h-1zM726 459h1v3h-1zM726 465h1v3h-1zM726 471h1v3h-1zM726 477h1v3h-1zM726 483h1v3h-1zM726 489h1v3h-1zM726 495h1v3h-1zM726 501h1v3h-1zM726 507h1v3h-1zM726 513h1v3h-1zM726 519h1v3h-1zM726 525h1v3h-1zM726 531h1v3h-1zM726 537h1v3h-1zM726 543h1v3h-1zM726 549h1v3h-1zM726 555h1v3h-1zM726 561h1v3h-1zM726 567h1v3h-1zM726 573h1v3h-1zM726 579h1v2h-1zM760 129h1v3h-1zM760 135h1v3h-1zM760 141h1v3h-1zM760 147h1v3h-1zM760 153h1v3h-1zM760 159h1v3h-1zM760 165h1v3h-1zM760 171h1v3h-1zM760 177h1v3h-1zM760 183h1v3h-1zM760 189h1v3h-1zM760 195h1v3h-1zM760 201h1v3h-1zM760 207h1v3h-1zM760 213h1v3h-1zM760 219h1v3h-1zM760 225h1v3h-1zM760 231h1v3h-1zM760 237h1v3h-1zM760 243h1v3h-1zM760 249h1v3h-1zM760 255h1v3h-1zM760 261h1v3h-1zM760 267h1v3h-1zM760 273h1v3h-1zM760 279h1v3h-1zM760 285h1v3h-1zM760 291h1v3h-1zM760 297h1v3h-1zM760 303h1v3h-1zM760 309h1v3h-1zM760 315h1v3h-1zM760 321h1v3h-1zM760 327h1v3h-1zM760 333h1v3h-1zM760 339h1v3h-1zM760 345h1v3h-1zM760 351h1v3h-1zM760 357h1v3h-1zM760 363h1v3h-1zM760 369h1v3h-1zM760 375h1v3h-1zM760 381h1v3h-1zM760 387h1v3h-1zM760 393h1v3h-1zM760 399h1v3h-1zM760 405h1v3h-1zM760 411h1v3h-1zM760 417h1v3h-1zM760 423h1v3h-1zM760 429h1v3h-1zM760 435h1v3h-1zM760 441h1v3h-1zM760 447h1v3h-1zM760 453h1v3h-1zM760 459h1v3h-1zM760 465h1v3h-1zM760 471h1v3h-1zM760 477h1v3h-1zM760 483h1v3h-1zM760 489h1v3h-1zM760 495h1v3h-1zM760 501h1v3h-1zM760 507h1v3h-1zM760 513h1v3h-1zM760 519h1v3h-1zM760 525h1v3h-1zM760 531h1v3h-1zM760 537h1v3h-1zM760 543h1v3h-1zM760 549h1v3h-1zM760 555h1v3h-1zM760 561h1v3h-1zM760 567h1v3h-1zM760 573h1v3h-1zM760 579h1v2h-1zM784 129h1v3h-1zM784 135h1v3h-1zM784 141h1v3h-1zM784 147h1v3h-1zM784 153h1v3h-1zM784 159h1v3h-1zM784 165h1v3h-1zM784 171h1v3h-1zM784 177h1v3h-1zM784 183h1v3h-1zM784 189h1v3h-1zM784 195h1v3h-1zM784 201h1v3h-1zM784 207h1v3h-1zM784 213h1v3h-1zM784 219h1v3h-1zM784 225h1v3h-1zM784 231h1v3h-1zM784 237h1v3h-1zM784 243h1v3h-1zM784 249h1v3h-1zM784 255h1v3h-1zM784 261h1v3h-1zM784 267h1v3h-1zM784 273h1v3h-1zM784 279h1v3h-1zM784 285h1v3h-1zM784 291h1v3h-1zM784 297h1v3h-1zM784 303h1v3h-1zM784 309h1v3h-1zM784 315h1v3h-1zM784 321h1v3h-1zM784 327h1v3h-1zM784 333h1v3h-1zM784 339h1v3h-1zM784 345h1v3h-1zM784 351h1v3h-1zM784 357h1v3h-1zM784 363h1v3h-1zM784 369h1v3h-1zM784 375h1v3h-1zM784 381h1v3h-1zM784 387h1v3h-1zM784 393h1v3h-1zM784 399h1v3h-1zM784 405h1v3h-1zM784 411h1v3h-1zM784 417h1v3h-1zM784 423h1v3h-1zM784 429h1v3h-1zM784 435h1v3h-1zM784 441h1v3h-1zM784 447h1v3h-1zM784 453h1v3h-1zM784 459h1v3h-1zM784 465h1v3h-1zM784 471h1v3h-1zM784 477h1v3h-1zM784 483h1v3h-1zM784 489h1v3h-1zM784 495h1v3h-1zM784 501h1v3h-1zM784 507h1v3h-1zM784 513h1v3h-1zM784 519h1v3h-1zM784 525h1v3h-1zM784 531h1v3h-1zM784 537h1v3h-1zM784 543h1v3h-1zM784 549h1v3h-1zM784 555h1v3h-1zM784 561h1v3h-1zM784 567h1v3h-1zM784 573h1v3h-1zM784 579h1v2h-1zM803 129h1v3h-1zM803 135h1v3h-1zM803 141h1v3h-1zM803 147h1v3h-1zM803 153h1v3h-1zM803 159h1v3h-1zM803 165h1v3h-1zM803 171h1v3h-1zM803 177h1v3h-1zM803 183h1v3h-1zM803 189h1v3h-1zM803 195h1v3h-1zM803 201h1v3h-1zM803 207h1v3h-1zM803 213h1v3h-1zM803 219h1v3h-1zM803 225h1v3h-1zM803 231h1v3h-1zM803 237h1v3h-1zM803 243h1v3h-1zM803 249h1v3h-1zM803 255h1v3h-1zM803 261h1v3h-1zM803 267h1v3h-1zM803 273h1v3h-1zM803 279h1v3h-1zM803 285h1v3h-1zM803 291h1v3h-1zM803 297h1v3h-1zM803 303h1v3h-1zM803 309h1v3h-1zM803 315h1v3h-1zM803 321h1v3h-1zM803 327h1v3h-1zM803 333h1v3h-1zM803 339h1v3h-1zM803 345h1v3h-1zM803 351h1v3h-1zM803 357h1v3h-1zM803 363h1v3h-1zM803 369h1v3h-1zM803 375h1v3h-1zM803 381h1v3h-1zM803 387h1v3h-1zM803 393h1v3h-1zM803 399h1v3h-1zM803 405h1v3h-1zM803 411h1v3h-1zM803 417h1v3h-1zM803 423h1v3h-1zM803 429h1v3h-1zM803 435h1v3h-1zM803 441h1v3h-1zM803 447h1v3h-1zM803 453h1v3h-1zM803 459h1v3h-1zM803 465h1v3h-1zM803 471h1v3h-1zM803 477h1v3h-1zM803 483h1v3h-1zM803 489h1v3h-1zM803 495h1v3h-1zM803 501h1v3h-1zM803 507h1v3h-1zM803 513h1v3h-1zM803 519h1v3h-1zM803 525h1v3h-1zM803 531h1v3h-1zM803 537h1v3h-1zM803 543h1v3h-1zM803 549h1v3h-1zM803 555h1v3h-1zM803 561h1v3h-1zM803 567h1v3h-1zM803 573h1v3h-1zM803 579h1v2h-1zM818 129h1v3h-1zM818 135h1v3h-1zM818 141h1v3h-1zM818 147h1v3h-1zM818 153h1v3h-1zM818 159h1v3h-1zM818 165h1v3h-1zM818 171h1v3h-1zM818 177h1v3h-1zM818 183h1v3h-1zM818 189h1v3h-1zM818 195h1v3h-1zM818 201h1v3h-1zM818 207h1v3h-1zM818 213h1v3h-1zM818 219h1v3h-1zM818 225h1v3h-1zM818 231h1v3h-1zM818 237h1v3h-1zM818 243h1v3h-1zM818 249h1v3h-1zM818 255h1v3h-1zM818 261h1v3h-1zM818 267h1v3h-1zM818 273h1v3h-1zM818 279h1v3h-1zM818 285h1v3h-1zM818 291h1v3h-1zM818 297h1v3h-1zM818 303h1v3h-1zM818 309h1v3h-1zM818 315h1v3h-1zM818 321h1v3h-1zM818 327h1v3h-1zM818 333h1v3h-1zM818 339h1v3h-1zM818 345h1v3h-1zM818 351h1v3h-1zM818 357h1v3h-1zM818 363h1v3h-1zM818 369h1v3h-1zM818 375h1v3h-1zM818 381h1v3h-1zM818 387h1v3h-1zM818 393h1v3h-1zM818 399h1v3h-1zM818 405h1v3h-1zM818 411h1v3h-1zM818 417h1v3h-1zM818 423h1v3h-1zM818 429h1v3h-1zM818 435h1v3h-1zM818 441h1v3h-1zM818 447h1v3h-1zM818 453h1v3h-1zM818 459h1v3h-1zM818 465h1v3h-1zM818 471h1v3h-1zM818 477h1v3h-1zM818 483h1v3h-1zM818 489h1v3h-1zM818 495h1v3h-1zM818 501h1v3h-1zM818 507h1v3h-1zM818 513h1v3h-1zM818 519h1v3h-1zM818 525h1v3h-1zM818 531h1v3h-1zM818 537h1v3h-1zM818 543h1v3h-1zM818 549h1v3h-1zM818 555h1v3h-1zM818 561h1v3h-1zM818 567h1v3h-1zM818 573h1v3h-1zM818 579h1v2h-1zM831 129h1v3h-1zM831 135h1v3h-1zM831 141h1v3h-1zM831 147h1v3h-1zM831 153h1v3h-1zM831 159h1v3h-1zM831 165h1v3h-1zM831 171h1v3h-1zM831 177h1v3h-1zM831 183h1v3h-1zM831 189h1v3h-1zM831 195h1v3h-1zM831 201h1v3h-1zM831 207h1v3h-1zM831 213h1v3h-1zM831 219h1v3h-1zM831 225h1v3h-1zM831 231h1v3h-1zM831 237h1v3h-1zM831 243h1v3h-1zM831 249h1v3h-1zM831 255h1v3h-1zM831 261h1v3h-1zM831 267h1v3h-1zM831 273h1v3h-1zM831 279h1v3h-1zM831 285h1v3h-1zM831 291h1v3h-1zM831 297h1v3h-1zM831 303h1v3h-1zM831 309h1v3h-1zM831 315h1v3h-1zM831 321h1v3h-1zM831 327h1v3h-1zM831 333h1v3h-1zM831 339h1v3h-1zM831 345h1v3h-1zM831 351h1v3h-1zM831 357h1v3h-1zM831 363h1v3h-1zM831 369h1v3h-1zM831 375h1v3h-1zM831 381h1v3h-1zM831 387h1v3h-1zM831 393h1v3h-1zM831 399h1v3h-1zM831 405h1v3h-1zM831 411h1v3h-1zM831 417h1v3h-1zM831 423h1v3h-1zM831 429h1v3h-1zM831 435h1v3h-1zM831 441h1v3h-1zM831 447h1v3h-1zM831 453h1v3h-1zM831 459h1v3h-1zM831 465h1v3h-1zM831 471h1v3h-1zM831 477h1v3h-1zM831 483h1v3h-1zM831 489h1v3h-1zM831 495h1v3h-1zM831 501h1v3h-1zM831 507h1v3h-1zM831 513h1v3h-1zM831 519h1v3h-1zM831 525h1v3h-1zM831 531h1v3h-1zM831 537h1v3h-1zM831 543h1v3h-1zM831 549h1v3h-1zM831 555h1v3h-1zM831 561h1v3h-1zM831 567h1v3h-1zM831 573h1v3h-1zM831 579h1v2h-1zM842 129h1v3h-1zM842 135h1v3h-1zM842 141h1v3h-1zM842 147h1v3h-1zM842 153h1v3h-1zM842 159h1v3h-1zM842 165h1v3h-1zM842 171h1v3h-1zM842 177h1v3h-1zM842 183h1v3h-1zM842 189h1v3h-1zM842 195h1v3h-1zM842 201h1v3h-1zM842 207h1v3h-1zM842 213h1v3h-1zM842 219h1v3h-1zM842 225h1v3h-1zM842 231h1v3h-1zM842 237h1v3h-1zM842 243h1v3h-1zM842 249h1v3h-1zM842 255h1v3h-1zM842 261h1v3h-1zM842 267h1v3h-1zM842 273h1v3h-1zM842 279h1v3h-1zM842 285h1v3h-1zM842 291h1v3h-1zM842 297h1v3h-1zM842 303h1v3h-1zM842 309h1v3h-1zM842 315h1v3h-1zM842 321h1v3h-1zM842 327h1v3h-1zM842 333h1v3h-1zM842 339h1v3h-1zM842 345h1v3h-1zM842 351h1v3h-1zM842 357h1v3h-1zM842 363h1v3h-1zM842 369h1v3h-1zM842 375h1v3h-1zM842 381h1v3h-1zM842 387h1v3h-1zM842 393h1v3h-1zM842 399h1v3h-1zM842 405h1v3h-1zM842 411h1v3h-1zM842 417h1v3h-1zM842 423h1v3h-1zM842 429h1v3h-1zM842 435h1v3h-1zM842 441h1v3h-1zM842 447h1v3h-1zM842 453h1v3h-1zM842 459h1v3h-1zM842 465h1v3h-1zM842 471h1v3h-1zM842 477h1v3h-1zM842 483h1v3h-1zM842 489h1v3h-1zM842 495h1v3h-1zM842 501h1v3h-1zM842 507h1v3h-1zM842 513h1v3h-1zM842 519h1v3h-1zM842 525h1v3h-1zM842 531h1v3h-1zM842 537h1v3h-1zM842 543h1v3h-1zM842 549h1v3h-1zM842 555h1v3h-1zM842 561h1v3h-1zM842 567h1v3h-1zM842 573h1v3h-1zM842 579h1v2h-1zM852 129h1v3h-1zM852 135h1v3h-1zM852 141h1v3h-1zM852 147h1v3h-1zM852 153h1v3h-1zM852 159h1v3h-1zM852 165h1v3h-1zM852 171h1v3h-1zM852 177h1v3h-1zM852 183h1v3h-1zM852 189h1v3h-1zM852 195h1v3h-1zM852 201h1v3h-1zM852 207h1v3h-1zM852 213h1v3h-1zM852 219h1v3h-1zM852 225h1v3h-1zM852 231h1v3h-1zM852 237h1v3h-1zM852 243h1v3h-1zM852 249h1v3h-1zM852 255h1v3h-1zM852 261h1v3h-1zM852 267h1v3h-1zM852 273h1v3h-1zM852 279h1v3h-1zM852 285h1v3h-1zM852 291h1v3h-1zM852 297h1v3h-1zM852 303h1v3h-1zM852 309h1v3h-1zM852 315h1v3h-1zM852 321h1v3h-1zM852 327h1v3h-1zM852 333h1v3h-1zM852 339h1v3h-1zM852 345h1v3h-1zM852 351h1v3h-1zM852 357h1v3h-1zM852 363h1v3h-1zM852 369h1v3h-1zM852 375h1v3h-1zM852 381h1v3h-1zM852 387h1v3h-1zM852 393h1v3h-1zM852 399h1v3h-1zM852 405h1v3h-1zM852 411h1v3h-1zM852 417h1v3h-1zM852 423h1v3h-1zM852 429h1v3h-1zM852 435h1v3h-1zM852 441h1v3h-1zM852 447h1v3h-1zM852 453h1v3h-1zM852 459h1v3h-1zM852 465h1v3h-1zM852 471h1v3h-1zM852 477h1v3h-1zM852 483h1v3h-1zM852 489h1v3h-1zM852 495h1v3h-1zM852 501h1v3h-1zM852 507h1v3h-1zM852 513h1v3h-1zM852 519h1v3h-1zM852 525h1v3h-1zM852 531h1v3h-1zM852 537h1v3h-1zM852 543h1v3h-1zM852 549h1v3h-1zM852 555h1v3h-1zM852 561h1v3h-1zM852 567h1v3h-1zM852 573h1v3h-1zM852 579h1v2h-1zM284 129h1v3h-1zM284 135h1v3h-1zM284 141h1v3h-1zM284 147h1v3h-1zM284 153h1v3h-1zM284 159h1v3h-1zM284 165h1v3h-1zM284 171h1v3h-1zM284 177h1v3h-1zM284 183h1v3h-1zM284 189h1v3h-1zM284 195h1v3h-1zM284 201h1v3h-1zM284 207h1v3h-1zM284 213h1v3h-1zM284 219h1v3h-1zM284 225h1v3h-1zM284 231h1v3h-1zM284 237h1v3h-1zM284 243h1v3h-1zM284 249h1v3h-1zM284 255h1v3h-1zM284 261h1v3h-1zM284 267h1v3h-1zM284 273h1v3h-1zM284 279h1v3h-1zM284 285h1v3h-1zM284 291h1v3h-1zM284 297h1v3h-1zM284 303h1v3h-1zM284 309h1v3h-1zM284 315h1v3h-1zM284 321h1v3h-1zM284 327h1v3h-1zM284 333h1v3h-1zM284 339h1v3h-1zM284 345h1v3h-1zM284 351h1v3h-1zM284 357h1v3h-1zM284 363h1v3h-1zM284 369h1v3h-1zM284 375h1v3h-1zM284 381h1v3h-1zM284 387h1v3h-1zM284 393h1v3h-1zM284 399h1v3h-1zM284 405h1v3h-1zM284 411h1v3h-1zM284 417h1v3h-1zM284 423h1v3h-1zM284 429h1v3h-1zM284 435h1v3h-1zM284 441h1v3h-1zM284 447h1v3h-1zM284 453h1v3h-1zM284 459h1v3h-1zM284 465h1v3h-1zM284 471h1v3h-1zM284 477h1v3h-1zM284 483h1v3h-1zM284 489h1v3h-1zM284 495h1v3h-1zM284 501h1v3h-1zM284 507h1v3h-1zM284 513h1v3h-1zM284 519h1v3h-1zM284 525h1v3h-1zM284 531h1v3h-1zM284 537h1v3h-1zM284 543h1v3h-1zM284 549h1v3h-1zM284 555h1v3h-1zM284 561h1v3h-1zM284 567h1v3h-1zM284 573h1v3h-1zM284 579h1v2h-1zM476 129h1v3h-1zM476 135h1v3h-1zM476 141h1v3h-1zM476 147h1v3h-1zM476 153h1v3h-1zM476 159h1v3h-1zM476 165h1v3h-1zM476 171h1v3h-1zM476 177h1v3h-1zM476 183h1v3h-1zM476 189h1v3h-1zM476 195h1v3h-1zM476 201h1v3h-1zM476 207h1v3h-1zM476 213h1v3h-1zM476 219h1v3h-1zM476 225h1v3h-1zM476 231h1v3h-1zM476 237h1v3h-1zM476 243h1v3h-1zM476 249h1v3h-1zM476 255h1v3h-1zM476 261h1v3h-1zM476 267h1v3h-1zM476 273h1v3h-1zM476 279h1v3h-1zM476 285h1v3h-1zM476 291h1v3h-1zM476 297h1v3h-1zM476 303h1v3h-1zM476 309h1v3h-1zM476 315h1v3h-1zM476 321h1v3h-1zM476 327h1v3h-1zM476 333h1v3h-1zM476 339h1v3h-1zM476 345h1v3h-1zM476 351h1v3h-1zM476 357h1v3h-1zM476 363h1v3h-1zM476 369h1v3h-1zM476 375h1v3h-1zM476 381h1v3h-1zM476 387h1v3h-1zM476 393h1v3h-1zM476 399h1v3h-1zM476 405h1v3h-1zM476 411h1v3h-1zM476 417h1v3h-1zM476 423h1v3h-1zM476 429h1v3h-1zM476 435h1v3h-1zM476 441h1v3h-1zM476 447h1v3h-1zM476 453h1v3h-1zM476 459h1v3h-1zM476 465h1v3h-1zM476 471h1v3h-1zM476 477h1v3h-1zM476 483h1v3h-1zM476 489h1v3h-1zM476 495h1v3h-1zM476 501h1v3h-1zM476 507h1v3h-1zM476 513h1v3h-1zM476 519h1v3h-1zM476 525h1v3h-1zM476 531h1v3h-1zM476 537h1v3h-1zM476 543h1v3h-1zM476 549h1v3h-1zM476 555h1v3h-1zM476 561h1v3h-1zM476 567h1v3h-1zM476 573h1v3h-1zM476 579h1v2h-1zM669 129h1v3h-1zM669 135h1v3h-1zM669 141h1v3h-1zM669 147h1v3h-1zM669 153h1v3h-1zM669 159h1v3h-1zM669 165h1v3h-1zM669 171h1v3h-1zM669 177h1v3h-1zM669 183h1v3h-1zM669 189h1v3h-1zM669 195h1v3h-1zM669 201h1v3h-1zM669 207h1v3h-1zM669 213h1v3h-1zM669 219h1v3h-1zM669 225h1v3h-1zM669 231h1v3h-1zM669 237h1v3h-1zM669 243h1v3h-1zM669 249h1v3h-1zM669 255h1v3h-1zM669 261h1v3h-1zM669 267h1v3h-1zM669 273h1v3h-1zM669 279h1v3h-1zM669 285h1v3h-1zM669 291h1v3h-1zM669 297h1v3h-1zM669 303h1v3h-1zM669 309h1v3h-1zM669 315h1v3h-1zM669 321h1v3h-1zM669 327h1v3h-1zM669 333h1v3h-1zM669 339h1v3h-1zM669 345h1v3h-1zM669 351h1v3h-1zM669 357h1v3h-1zM669 363h1v3h-1zM669 369h1v3h-1zM669 375h1v3h-1zM669 381h1v3h-1zM669 387h1v3h-1zM669 393h1v3h-1zM669 399h1v3h-1zM669 405h1v3h-1zM669 411h1v3h-1zM669 417h1v3h-1zM669 423h1v3h-1zM669 429h1v3h-1zM669 435h1v3h-1zM669 441h1v3h-1zM669 447h1v3h-1zM669 453h1v3h-1zM669 459h1v3h-1zM669 465h1v3h-1zM669 471h1v3h-1zM669 477h1v3h-1zM669 483h1v3h-1zM669 489h1v3h-1zM669 495h1v3h-1zM669 501h1v3h-1zM669 507h1v3h-1zM669 513h1v3h-1zM669 519h1v3h-1zM669 525h1v3h-1zM669 531h1v3h-1zM669 537h1v3h-1zM669 543h1v3h-1zM669 549h1v3h-1zM669 555h1v3h-1zM669 561h1v3h-1zM669 567h1v3h-1zM669 573h1v3h-1zM669 579h1v2h-1zM91 182h3v1h-3zM97 182h3v1h-3zM103 182h3v1h-3zM109 182h3v1h-3zM115 182h3v1h-3zM121 182h3v1h-3zM127 182h3v1h-3zM133 182h3v1h-3zM139 182h3v1h-3zM145 182h3v1h-3zM151 182h3v1h-3zM157 182h3v1h-3zM163 182h3v1h-3zM169 182h3v1h-3zM175 182h3v1h-3zM181 182h3v1h-3zM187 182h3v1h-3zM193 182h3v1h-3zM199 182h3v1h-3zM205 182h3v1h-3zM211 182h3v1h-3zM217 182h3v1h-3zM223 182h3v1h-3zM229 182h3v1h-3zM235 182h3v1h-3zM241 182h3v1h-3zM247 182h3v1h-3zM253 182h3v1h-3zM259 182h3v1h-3zM265 182h3v1h-3zM271 182h3v1h-3zM277 182h3v1h-3zM283 182h3v1h-3zM289 182h3v1h-3zM295 182h3v1h-3zM301 182h3v1h-3zM307 182h3v1h-3zM313 182h3v1h-3zM319 182h3v1h-3zM325 182h3v1h-3zM331 182h3v1h-3zM337 182h3v1h-3zM343 182h3v1h-3zM349 182h3v1h-3zM355 182h3v1h-3zM361 182h3v1h-3zM367 182h3v1h-3zM373 182h3v1h-3zM379 182h3v1h-3zM385 182h3v1h-3zM391 182h3v1h-3zM397 182h3v1h-3zM403 182h3v1h-3zM409 182h3v1h-3zM415 182h3v1h-3zM421 182h3v1h-3zM427 182h3v1h-3zM433 182h3v1h-3zM439 182h3v1h-3zM445 182h3v1h-3zM451 182h3v1h-3zM457 182h3v1h-3zM463 182h3v1h-3zM469 182h3v1h-3zM475 182h3v1h-3zM481 182h3v1h-3zM487 182h3v1h-3zM493 182h3v1h-3zM499 182h3v1h-3zM505 182h3v1h-3zM511 182h3v1h-3zM517 182h3v1h-3zM523 182h3v1h-3zM529 182h3v1h-3zM535 182h3v1h-3zM541 182h3v1h-3zM547 182h3v1h-3zM553 182h3v1h-3zM559 182h3v1h-3zM565 182h3v1h-3zM571 182h3v1h-3zM577 182h3v1h-3zM583 182h3v1h-3zM589 182h3v1h-3zM595 182h3v1h-3zM601 182h3v1h-3zM607 182h3v1h-3zM613 182h3v1h-3zM619 182h3v1h-3zM625 182h3v1h-3zM631 182h3v1h-3zM637 182h3v1h-3zM643 182h3v1h-3zM649 182h3v1h-3zM655 182h3v1h-3zM661 182h3v1h-3zM667 182h3v1h-3zM673 182h3v1h-3zM679 182h3v1h-3zM685 182h3v1h-3zM691 182h3v1h-3zM697 182h3v1h-3zM703 182h3v1h-3zM709 182h3v1h-3zM715 182h3v1h-3zM721 182h3v1h-3zM727 182h3v1h-3zM733 182h3v1h-3zM739 182h3v1h-3zM745 182h3v1h-3zM751 182h3v1h-3zM757 182h3v1h-3zM763 182h3v1h-3zM769 182h3v1h-3zM775 182h3v1h-3zM781 182h3v1h-3zM787 182h3v1h-3zM793 182h3v1h-3zM799 182h3v1h-3zM805 182h3v1h-3zM811 182h3v1h-3zM817 182h3v1h-3zM823 182h3v1h-3zM829 182h3v1h-3zM835 182h3v1h-3zM841 182h3v1h-3zM847 182h3v1h-3zM853 182h3v1h-3zM859 182h2v1h-2zM91 239h3v1h-3zM97 239h3v1h-3zM103 239h3v1h-3zM109 239h3v1h-3zM115 239h3v1h-3zM121 239h3v1h-3zM127 239h3v1h-3zM133 239h3v1h-3zM139 239h3v1h-3zM145 239h3v1h-3zM151 239h3v1h-3zM157 239h3v1h-3zM163 239h3v1h-3zM169 239h3v1h-3zM175 239h3v1h-3zM181 239h3v1h-3zM187 239h3v1h-3zM193 239h3v1h-3zM199 239h3v1h-3zM205 239h3v1h-3zM211 239h3v1h-3zM217 239h3v1h-3zM223 239h3v1h-3zM229 239h3v1h-3zM235 239h3v1h-3zM241 239h3v1h-3zM247 239h3v1h-3zM253 239h3v1h-3zM259 239h3v1h-3zM265 239h3v1h-3zM271 239h3v1h-3zM277 239h3v1h-3zM283 239h3v1h-3zM289 239h3v1h-3zM295 239h3v1h-3zM301 239h3v1h-3zM307 239h3v1h-3zM313 239h3v1h-3zM319 239h3v1h-3zM325 239h3v1h-3zM331 239h3v1h-3zM337 239h3v1h-3zM343 239h3v1h-3zM349 239h3v1h-3zM355 239h3v1h-3zM361 239h3v1h-3zM367 239h3v1h-3zM373 239h3v1h-3zM379 239h3v1h-3zM385 239h3v1h-3zM391 239h3v1h-3zM397 239h3v1h-3zM403 239h3v1h-3zM409 239h3v1h-3zM415 239h3v1h-3zM421 239h3v1h-3zM427 239h3v1h-3zM433 239h3v1h-3zM439 239h3v1h-3zM445 239h3v1h-3zM451 239h3v1h-3zM457 239h3v1h-3zM463 239h3v1h-3zM469 239h3v1h-3zM475 239h3v1h-3zM481 239h3v1h-3zM487 239h3v1h-3zM493 239h3v1h-3zM499 239h3v1h-3zM505 239h3v1h-3zM511 239h3v1h-3zM517 239h3v1h-3zM523 239h3v1h-3zM529 239h3v1h-3zM535 239h3v1h-3zM541 239h3v1h-3zM547 239h3v1h-3zM553 239h3v1h-3zM559 239h3v1h-3zM565 239h3v1h-3zM571 239h3v1h-3zM577 239h3v1h-3zM583 239h3v1h-3zM589 239h3v1h-3zM595 239h3v1h-3zM601 239h3v1h-3zM607 239h3v1h-3zM613 239h3v1h-3zM619 239h3v1h-3zM625 239h3v1h-3zM631 239h3v1h-3zM637 239h3v1h-3zM643 239h3v1h-3zM649 239h3v1h-3zM655 239h3v1h-3zM661 239h3v1h-3zM667 239h3v1h-3zM673 239h3v1h-3zM679 239h3v1h-3zM685 239h3v1h-3zM691 239h3v1h-3zM697 239h3v1h-3zM703 239h3v1h-3zM709 239h3v1h-3zM715 239h3v1h-3zM721 239h3v1h-3zM727 239h3v1h-3zM733 239h3v1h-3zM739 239h3v1h-3zM745 239h3v1h-3zM751 239h3v1h-3zM757 239h3v1h-3zM763 239h3v1h-3zM769 239h3v1h-3zM775 239h3v1h-3zM781 239h3v1h-3zM787 239h3v1h-3zM793 239h3v1h-3zM799 239h3v1h-3zM805 239h3v1h-3zM811 239h3v1h-3zM817 239h3v1h-3zM823 239h3v1h-3zM829 239h3v1h-3zM835 239h3v1h-3zM841 239h3v1h-3zM847 239h3v1h-3zM853 239h3v1h-3zM859 239h2v1h-2zM91 296h3v1h-3zM97 296h3v1h-3zM103 296h3v1h-3zM109 296h3v1h-3zM115 296h3v1h-3zM121 296h3v1h-3zM127 296h3v1h-3zM133 296h3v1h-3zM139 296h3v1h-3zM145 296h3v1h-3zM151 296h3v1h-3zM157 296h3v1h-3zM163 296h3v1h-3zM169 296h3v1h-3zM175 296h3v1h-3zM181 296h3v1h-3zM187 296h3v1h-3zM193 296h3v1h-3zM199 296h3v1h-3zM205 296h3v1h-3zM211 296h3v1h-3zM217 296h3v1h-3zM223 296h3v1h-3zM229 296h3v1h-3zM235 296h3v1h-3zM241 296h3v1h-3zM247 296h3v1h-3zM253 296h3v1h-3zM259 296h3v1h-3zM265 296h3v1h-3zM271 296h3v1h-3zM277 296h3v1h-3zM283 296h3v1h-3zM289 296h3v1h-3zM295 296h3v1h-3zM301 296h3v1h-3zM307 296h3v1h-3zM313 296h3v1h-3zM319 296h3v1h-3zM325 296h3v1h-3zM331 296h3v1h-3zM337 296h3v1h-3zM343 296h3v1h-3zM349 296h3v1h-3zM355 296h3v1h-3zM361 296h3v1h-3zM367 296h3v1h-3zM373 296h3v1h-3zM379 296h3v1h-3zM385 296h3v1h-3zM391 296h3v1h-3zM397 296h3v1h-3zM403 296h3v1h-3zM409 296h3v1h-3zM415 296h3v1h-3zM421 296h3v1h-3zM427 296h3v1h-3zM433 296h3v1h-3zM439 296h3v1h-3zM445 296h3v1h-3zM451 296h3v1h-3zM457 296h3v1h-3zM463 296h3v1h-3zM469 296h3v1h-3zM475 296h3v1h-3zM481 296h3v1h-3zM487 296h3v1h-3zM493 296h3v1h-3zM499 296h3v1h-3zM505 296h3v1h-3zM511 296h3v1h-3zM517 296h3v1h-3zM523 296h3v1h-3zM529 296h3v1h-3zM535 296h3v1h-3zM541 296h3v1h-3zM547 296h3v1h-3zM553 296h3v1h-3zM559 296h3v1h-3zM565 296h3v1h-3zM571 296h3v1h-3zM577 296h3v1h-3zM583 296h3v1h-3zM589 296h3v1h-3zM595 296h3v1h-3zM601 296h3v1h-3zM607 296h3v1h-3zM613 296h3v1h-3zM619 296h3v1h-3zM625 296h3v1h-3zM631 296h3v1h-3zM637 296h3v1h-3zM643 296h3v1h-3zM649 296h3v1h-3zM655 296h3v1h-3zM661 296h3v1h-3zM667 296h3v1h-3zM673 296h3v1h-3zM679 296h3v1h-3zM685 296h3v1h-3zM691 296h3v1h-3zM697 296h3v1h-3zM703 296h3v1h-3zM709 296h3v1h-3zM715 296h3v1h-3zM721 296h3v1h-3zM727 296h3v1h-3zM733 296h3v1h-3zM739 296h3v1h-3zM745 296h3v1h-3zM751 296h3v1h-3zM757 296h3v1h-3zM763 296h3v1h-3zM769 296h3v1h-3zM775 296h3v1h-3zM781 296h3v1h-3zM787 296h3v1h-3zM793 296h3v1h-3zM799 296h3v1h-3zM805 296h3v1h-3zM811 296h3v1h-3zM817 296h3v1h-3zM823 296h3v1h-3zM829 296h3v1h-3zM835 296h3v1h-3zM841 296h3v1h-3zM847 296h3v1h-3zM853 296h3v1h-3zM859 296h2v1h-2zM91 353h3v1h-3zM97 353h3v1h-3zM103 353h3v1h-3zM109 353h3v1h-3zM115 353h3v1h-3zM121 353h3v1h-3zM127 353h3v1h-3zM133 353h3v1h-3zM139 353h3v1h-3zM145 353h3v1h-3zM151 353h3v1h-3zM157 353h3v1h-3zM163 353h3v1h-3zM169 353h3v1h-3zM175 353h3v1h-3zM181 353h3v1h-3zM187 353h3v1h-3zM193 353h3v1h-3zM199 353h3v1h-3zM205 353h3v1h-3zM211 353h3v1h-3zM217 353h3v1h-3zM223 353h3v1h-3zM229 353h3v1h-3zM235 353h3v1h-3zM241 353h3v1h-3zM247 353h3v1h-3zM253 353h3v1h-3zM259 353h3v1h-3zM265 353h3v1h-3zM271 353h3v1h-3zM277 353h3v1h-3zM283 353h3v1h-3zM289 353h3v1h-3zM295 353h3v1h-3zM301 353h3v1h-3zM307 353h3v1h-3zM313 353h3v1h-3zM319 353h3v1h-3zM325 353h3v1h-3zM331 353h3v1h-3zM337 353h3v1h-3zM343 353h3v1h-3zM349 353h3v1h-3zM355 353h3v1h-3zM361 353h3v1h-3zM367 353h3v1h-3zM373 353h3v1h-3zM379 353h3v1h-3zM385 353h3v1h-3zM391 353h3v1h-3zM397 353h3v1h-3zM403 353h3v1h-3zM409 353h3v1h-3zM415 353h3v1h-3zM421 353h3v1h-3zM427 353h3v1h-3zM433 353h3v1h-3zM439 353h3v1h-3zM445 353h3v1h-3zM451 353h3v1h-3zM457 353h3v1h-3zM463 353h3v1h-3zM469 353h3v1h-3zM475 353h3v1h-3zM481 353h3v1h-3zM487 353h3v1h-3zM493 353h3v1h-3zM499 353h3v1h-3zM505 353h3v1h-3zM511 353h3v1h-3zM517 353h3v1h-3zM523 353h3v1h-3zM529 353h3v1h-3zM535 353h3v1h-3zM541 353h3v1h-3zM547 353h3v1h-3zM553 353h3v1h-3zM559 353h3v1h-3zM565 353h3v1h-3zM571 353h3v1h-3zM577 353h3v1h-3zM583 353h3v1h-3zM589 353h3v1h-3zM595 353h3v1h-3zM601 353h3v1h-3zM607 353h3v1h-3zM613 353h3v1h-3zM619 353h3v1h-3zM625 353h3v1h-3zM631 353h3v1h-3zM637 353h3v1h-3zM643 353h3v1h-3zM649 353h3v1h-3zM655 353h3v1h-3zM661 353h3v1h-3zM667 353h3v1h-3zM673 353h3v1h-3zM679 353h3v1h-3zM685 353h3v1h-3zM691 353h3v1h-3zM697 353h3v1h-3zM703 353h3v1h-3zM709 353h3v1h-3zM715 353h3v1h-3zM721 353h3v1h-3zM727 353h3v1h-3zM733 353h3v1h-3zM739 353h3v1h-3zM745 353h3v1h-3zM751 353h3v1h-3zM757 353h3v1h-3zM763 353h3v1h-3zM769 353h3v1h-3zM775 353h3v1h-3zM781 353h3v1h-3zM787 353h3v1h-3zM793 353h3v1h-3zM799 353h3v1h-3zM805 353h3v1h-3zM811 353h3v1h-3zM817 353h3v1h-3zM823 353h3v1h-3zM829 353h3v1h-3zM835 353h3v1h-3zM841 353h3v1h-3zM847 353h3v1h-3zM853 353h3v1h-3zM859 353h2v1h-2zM91 410h3v1h-3zM97 410h3v1h-3zM103 410h3v1h-3zM109 410h3v1h-3zM115 410h3v1h-3zM121 410h3v1h-3zM127 410h3v1h-3zM133 410h3v1h-3zM139 410h3v1h-3zM145 410h3v1h-3zM151 410h3v1h-3zM157 410h3v1h-3zM163 410h3v1h-3zM169 410h3v1h-3zM175 410h3v1h-3zM181 410h3v1h-3zM187 410h3v1h-3zM193 410h3v1h-3zM199 410h3v1h-3zM205 410h3v1h-3zM211 410h3v1h-3zM217 410h3v1h-3zM223 410h3v1h-3zM229 410h3v1h-3zM235 410h3v1h-3zM241 410h3v1h-3zM247 410h3v1h-3zM253 410h3v1h-3zM259 410h3v1h-3zM265 410h3v1h-3zM271 410h3v1h-3zM277 410h3v1h-3zM283 410h3v1h-3zM289 410h3v1h-3zM295 410h3v1h-3zM301 410h3v1h-3zM307 410h3v1h-3zM313 410h3v1h-3zM319 410h3v1h-3zM325 410h3v1h-3zM331 410h3v1h-3zM337 410h3v1h-3zM343 410h3v1h-3zM349 410h3v1h-3zM355 410h3v1h-3zM361 410h3v1h-3zM367 410h3v1h-3zM373 410h3v1h-3zM379 410h3v1h-3zM385 410h3v1h-3zM391 410h3v1h-3zM397 410h3v1h-3zM403 410h3v1h-3zM409 410h3v1h-3zM415 410h3v1h-3zM421 410h3v1h-3zM427 410h3v1h-3zM433 410h3v1h-3zM439 410h3v1h-3zM445 410h3v1h-3zM451 410h3v1h-3zM457 410h3v1h-3zM463 410h3v1h-3zM469 410h3v1h-3zM475 410h3v1h-3zM481 410h3v1h-3zM487 410h3v1h-3zM493 410h3v1h-3zM499 410h3v1h-3zM505 410h3v1h-3zM511 410h3v1h-3zM517 410h3v1h-3zM523 410h3v1h-3zM529 410h3v1h-3zM535 410h3v1h-3zM541 410h3v1h-3zM547 410h3v1h-3zM553 410h3v1h-3zM559 410h3v1h-3zM565 410h3v1h-3zM571 410h3v1h-3zM577 410h3v1h-3zM583 410h3v1h-3zM589 410h3v1h-3zM595 410h3v1h-3zM601 410h3v1h-3zM607 410h3v1h-3zM613 410h3v1h-3zM619 410h3v1h-3zM625 410h3v1h-3zM631 410h3v1h-3zM637 410h3v1h-3zM643 410h3v1h-3zM649 410h3v1h-3zM655 410h3v1h-3zM661 410h3v1h-3zM667 410h3v1h-3zM673 410h3v1h-3zM679 410h3v1h-3zM685 410h3v1h-3zM691 410h3v1h-3zM697 410h3v1h-3zM703 410h3v1h-3zM709 410h3v1h-3zM715 410h3v1h-3zM721 410h3v1h-3zM727 410h3v1h-3zM733 410h3v1h-3zM739 410h3v1h-3zM745 410h3v1h-3zM751 410h3v1h-3zM757 410h3v1h-3zM763 410h3v1h-3zM769 410h3v1h-3zM775 410h3v1h-3zM781 410h3v1h-3zM787 410h3v1h-3zM793 410h3v1h-3zM799 410h3v1h-3zM805 410h3v1h-3zM811 410h3v1h-3zM817 410h3v1h-3zM823 410h3v1h-3zM829 410h3v1h-3zM835 410h3v1h-3zM841 410h3v1h-3zM847 410h3v1h-3zM853 410h3v1h-3zM859 410h2v1h-2zM91 467h3v1h-3zM97 467h3v1h-3zM103 467h3v1h-3zM109 467h3v1h-3zM115 467h3v1h-3zM121 467h3v1h-3zM127 467h3v1h-3zM133 467h3v1h-3zM139 467h3v1h-3zM145 467h3v1h-3zM151 467h3v1h-3zM157 467h3v1h-3zM163 467h3v1h-3zM169 467h3v1h-3zM175 467h3v1h-3zM181 467h3v1h-3zM187 467h3v1h-3zM193 467h3v1h-3zM199 467h3v1h-3zM205 467h3v1h-3zM211 467h3v1h-3zM217 467h3v1h-3zM223 467h3v1h-3zM229 467h3v1h-3zM235 467h3v1h-3zM241 467h3v1h-3zM247 467h3v1h-3zM253 467h3v1h-3zM259 467h3v1h-3zM265 467h3v1h-3zM271 467h3v1h-3zM277 467h3v1h-3zM283 467h3v1h-3zM289 467h3v1h-3zM295 467h3v1h-3zM301 467h3v1h-3zM307 467h3v1h-3zM313 467h3v1h-3zM319 467h3v1h-3zM325 467h3v1h-3zM331 467h3v1h-3zM337 467h3v1h-3zM343 467h3v1h-3zM349 467h3v1h-3zM355 467h3v1h-3zM361 467h3v1h-3zM367 467h3v1h-3zM373 467h3v1h-3zM379 467h3v1h-3zM385 467h3v1h-3zM391 467h3v1h-3zM397 467h3v1h-3zM403 467h3v1h-3zM409 467h3v1h-3zM415 467h3v1h-3zM421 467h3v1h-3zM427 467h3v1h-3zM433 467h3v1h-3zM439 467h3v1h-3zM445 467h3v1h-3zM451 467h3v1h-3zM457 467h3v1h-3zM463 467h3v1h-3zM469 467h3v1h-3zM475 467h3v1h-3zM481 467h3v1h-3zM487 467h3v1h-3zM493 467h3v1h-3zM499 467h3v1h-3zM505 467h3v1h-3zM511 467h3v1h-3zM517 467h3v1h-3zM523 467h3v1h-3zM529 467h3v1h-3zM535 467h3v1h-3zM541 467h3v1h-3zM547 467h3v1h-3zM553 467h3v1h-3zM559 467h3v1h-3zM565 467h3v1h-3zM571 467h3v1h-3zM577 467h3v1h-3zM583 467h3v1h-3zM589 467h3v1h-3zM595 467h3v1h-3zM601 467h3v1h-3zM607 467h3v1h-3zM613 467h3v1h-3zM619 467h3v1h-3zM625 467h3v1h-3zM631 467h3v1h-3zM637 467h3v1h-3zM643 467h3v1h-3zM649 467h3v1h-3zM655 467h3v1h-3zM661 467h3v1h-3zM667 467h3v1h-3zM673 467h3v1h-3zM679 467h3v1h-3zM685 467h3v1h-3zM691 467h3v1h-3zM697 467h3v1h-3zM703 467h3v1h-3zM709 467h3v1h-3zM715 467h3v1h-3zM721 467h3v1h-3zM727 467h3v1h-3zM733 467h3v1h-3zM739 467h3v1h-3zM745 467h3v1h-3zM751 467h3v1h-3zM757 467h3v1h-3zM763 467h3v1h-3zM769 467h3v1h-3zM775 467h3v1h-3zM781 467h3v1h-3zM787 467h3v1h-3zM793 467h3v1h-3zM799 467h3v1h-3zM805 467h3v1h-3zM811 467h3v1h-3zM817 467h3v1h-3zM823 467h3v1h-3zM829 467h3v1h-3zM835 467h3v1h-3zM841 467h3v1h-3zM847 467h3v1h-3zM853 467h3v1h-3zM859 467h2v1h-2zM91 524h3v1h-3zM97 524h3v1h-3zM103 524h3v1h-3zM109 524h3v1h-3zM115 524h3v1h-3zM121 524h3v1h-3zM127 524h3v1h-3zM133 524h3v1h-3zM139 524h3v1h-3zM145 524h3v1h-3zM151 524h3v1h-3zM157 524h3v1h-3zM163 524h3v1h-3zM169 524h3v1h-3zM175 524h3v1h-3zM181 524h3v1h-3zM187 524h3v1h-3zM193 524h3v1h-3zM199 524h3v1h-3zM205 524h3v1h-3zM211 524h3v1h-3zM217 524h3v1h-3zM223 524h3v1h-3zM229 524h3v1h-3zM235 524h3v1h-3zM241 524h3v1h-3zM247 524h3v1h-3zM253 524h3v1h-3zM259 524h3v1h-3zM265 524h3v1h-3zM271 524h3v1h-3zM277 524h3v1h-3zM283 524h3v1h-3zM289 524h3v1h-3zM295 524h3v1h-3zM301 524h3v1h-3zM307 524h3v1h-3zM313 524h3v1h-3zM319 524h3v1h-3zM325 524h3v1h-3zM331 524h3v1h-3zM337 524h3v1h-3zM343 524h3v1h-3zM349 524h3v1h-3zM355 524h3v1h-3zM361 524h3v1h-3zM367 524h3v1h-3zM373 524h3v1h-3zM379 524h3v1h-3zM385 524h3v1h-3zM391 524h3v1h-3zM397 524h3v1h-3zM403 524h3v1h-3zM409 524h3v1h-3zM415 524h3v1h-3zM421 524h3v1h-3zM427 524h3v1h-3zM433 524h3v1h-3zM439 524h3v1h-3zM445 524h3v1h-3zM451 524h3v1h-3zM457 524h3v1h-3zM463 524h3v1h-3zM469 524h3v1h-3zM475 524h3v1h-3zM481 524h3v1h-3zM487 524h3v1h-3zM493 524h3v1h-3zM499 524h3v1h-3zM505 524h3v1h-3zM511 524h3v1h-3zM517 524h3v1h-3zM523 524h3v1h-3zM529 524h3v1h-3zM535 524h3v1h-3zM541 524h3v1h-3zM547 524h3v1h-3zM553 524h3v1h-3zM559 524h3v1h-3zM565 524h3v1h-3zM571 524h3v1h-3zM577 524h3v1h-3zM583 524h3v1h-3zM589 524h3v1h-3zM595 524h3v1h-3zM601 524h3v1h-3zM607 524h3v1h-3zM613 524h3v1h-3zM619 524h3v1h-3zM625 524h3v1h-3zM631 524h3v1h-3zM637 524h3v1h-3zM643 524h3v1h-3zM649 524h3v1h-3zM655 524h3v1h-3zM661 524h3v1h-3zM667 524h3v1h-3zM673 524h3v1h-3zM679 524h3v1h-3zM685 524h3v1h-3zM691 524h3v1h-3zM697 524h3v1h-3zM703 524h3v1h-3zM709 524h3v1h-3zM715 524h3v1h-3zM721 524h3v1h-3zM727 524h3v1h-3zM733 524h3v1h-3zM739 524h3v1h-3zM745 524h3v1h-3zM751 524h3v1h-3zM757 524h3v1h-3zM763 524h3v1h-3zM769 524h3v1h-3zM775 524h3v1h-3zM781 524h3v1h-3zM787 524h3v1h-3zM793 524h3v1h-3zM799 524h3v1h-3zM805 524h3v1h-3zM811 524h3v1h-3zM817 524h3v1h-3zM823 524h3v1h-3zM829 524h3v1h-3zM835 524h3v1h-3zM841 524h3v1h-3zM847 524h3v1h-3zM853 524h3v1h-3zM859 524h2v1h-2z" fill="#808080"/>
<path d="M84 125h778v1h-778zM84 581h778v1h-778zM91 125h1v464h-1zM861 125h1v464h-1zM84 125h7v1h-7zM84 182h7v1h-7zM84 239h7v1h-7zM84 296h7v1h-7zM84 353h7v1h-7zM84 410h7v1h-7zM84 467h7v1h-7zM84 524h7v1h-7zM84 581h7v1h-7zM149 582h1v3h-1zM183 582h1v3h-1zM207 582h1v3h-1zM226 582h1v3h-1zM241 582h1v3h-1zM254 582h1v3h-1zM265 582h1v3h-1zM275 582h1v3h-1zM341 582h1v3h-1zM375 582h1v3h-1zM399 582h1v3h-1zM418 582h1v3h-1zM433 582h1v3h-1zM446 582h1v3h-1zM457 582h1v3h-1zM467 582h1v3h-1zM534 582h1v3h-1zM568 582h1v3h-1zM592 582h1v3h-1zM611 582h1v3h-1zM626 582h1v3h-1zM639 582h1v3h-1zM650 582h1v3h-1zM660 582h1v3h-1zM726 582h1v3h-1zM760 582h1v3h-1zM784 582h1v3h-1zM803 582h1v3h-1zM818 582h1v3h-1zM831 582h1v3h-1zM842 582h1v3h-1zM852 582h1v3h-1zM284 582h1v7h-1zM476 582h1v7h-1zM669 582h1v7h-1z" fill="#b8b8b8"/>
<g transform="translate(11,130) scale(0.85,1)"><text x="0" y="0" font-family="Liberation Sans" font-size="14" fill="#c0c0c0" stroke="#c0c0c0" stroke-width="0.6" text-anchor="start" textLength="85.88" lengthAdjust="spacing" filter="url(#crisp)">260nV/Hz½</text></g>
<g transform="translate(11,187) scale(0.85,1)"><text x="0" y="0" font-family="Liberation Sans" font-size="14" fill="#c0c0c0" stroke="#c0c0c0" stroke-width="0.6" text-anchor="start" textLength="85.88" lengthAdjust="spacing" filter="url(#crisp)">240nV/Hz½</text></g>
<g transform="translate(11,244) scale(0.85,1)"><text x="0" y="0" font-family="Liberation Sans" font-size="14" fill="#c0c0c0" stroke="#c0c0c0" stroke-width="0.6" text-anchor="start" textLength="85.88" lengthAdjust="spacing" filter="url(#crisp)">220nV/Hz½</text></g>
<g transform="translate(11,301) scale(0.85,1)"><text x="0" y="0" font-family="Liberation Sans" font-size="14" fill="#c0c0c0" stroke="#c0c0c0" stroke-width="0.6" text-anchor="start" textLength="85.88" lengthAdjust="spacing" filter="url(#crisp)">200nV/Hz½</text></g>
<g transform="translate(11,358) scale(0.85,1)"><text x="0" y="0" font-family="Liberation Sans" font-size="14" fill="#c0c0c0" stroke="#c0c0c0" stroke-width="0.6" text-anchor="start" textLength="85.88" lengthAdjust="spacing" filter="url(#crisp)">180nV/Hz½</text></g>
<g transform="translate(11,415) scale(0.85,1)"><text x="0" y="0" font-family="Liberation Sans" font-size="14" fill="#c0c0c0" stroke="#c0c0c0" stroke-width="0.6" text-anchor="start" textLength="85.88" lengthAdjust="spacing" filter="url(#crisp)">160nV/Hz½</text></g>
<g transform="translate(11,472) scale(0.85,1)"><text x="0" y="0" font-family="Liberation Sans" font-size="14" fill="#c0c0c0" stroke="#c0c0c0" stroke-width="0.6" text-anchor="start" textLength="85.88" lengthAdjust="spacing" filter="url(#crisp)">140nV/Hz½</text></g>
<g transform="translate(11,529) scale(0.85,1)"><text x="0" y="0" font-family="Liberation Sans" font-size="14" fill="#c0c0c0" stroke="#c0c0c0" stroke-width="0.6" text-anchor="start" textLength="85.88" lengthAdjust="spacing" filter="url(#crisp)">120nV/Hz½</text></g>
<g transform="translate(11,586) scale(0.85,1)"><text x="0" y="0" font-family="Liberation Sans" font-size="14" fill="#c0c0c0" stroke="#c0c0c0" stroke-width="0.6" text-anchor="start" textLength="85.88" lengthAdjust="spacing" filter="url(#crisp)">100nV/Hz½</text></g>
<g transform="translate(74,602) scale(0.85,1)"><text x="0" y="0" font-family="Liberation Sans" font-size="14" fill="#c0c0c0" stroke="#c0c0c0" stroke-width="0.6" text-anchor="start" textLength="38.82" lengthAdjust="spacing" filter="url(#crisp)">10Hz</text></g>
<g transform="translate(263,602) scale(0.85,1)"><text x="0" y="0" font-family="Liberation Sans" font-size="14" fill="#c0c0c0" stroke="#c0c0c0" stroke-width="0.6" text-anchor="start" textLength="49.41" lengthAdjust="spacing" filter="url(#crisp)">100Hz</text></g>
<g transform="translate(458,602) scale(0.85,1)"><text x="0" y="0" font-family="Liberation Sans" font-size="14" fill="#c0c0c0" stroke="#c0c0c0" stroke-width="0.6" text-anchor="start" textLength="41.18" lengthAdjust="spacing" filter="url(#crisp)">1KHz</text></g>
<g transform="translate(647,602) scale(0.85,1)"><text x="0" y="0" font-family="Liberation Sans" font-size="14" fill="#c0c0c0" stroke="#c0c0c0" stroke-width="0.6" text-anchor="start" textLength="50.59" lengthAdjust="spacing" filter="url(#crisp)">10KHz</text></g>
<g transform="translate(835,602) scale(0.85,1)"><text x="0" y="0" font-family="Liberation Sans" font-size="14" fill="#c0c0c0" stroke="#c0c0c0" stroke-width="0.6" text-anchor="start" textLength="58.82" lengthAdjust="spacing" filter="url(#crisp)">100KHz</text></g>
<g transform="translate(446,120) scale(0.85,1)"><text x="0" y="0" font-family="Liberation Sans" font-size="14" fill="#00ff00" stroke="#00ff00" stroke-width="0.6" text-anchor="start" textLength="69.41" lengthAdjust="spacing" filter="url(#crisp)">V(onoise)</text></g>
<path d="M91 366h1v1h-1zM92 366h1v2h-1zM93 367h1v2h-1zM94 368h1v2h-1zM95 369h1v2h-1zM96 370h1v2h-1zM97 371h1v2h-1zM98 372h1v2h-1zM99 373h1v2h-1zM100 374h1v2h-1zM101 375h1v2h-1zM102 376h1v2h-1zM103 377h1v2h-1zM104 378h1v2h-1zM105 379h1v2h-1zM106 380h1v2h-1zM107 381h1v1h-1zM108 381h1v2h-1zM109 382h1v2h-1zM110 383h1v2h-1zM111 384h1v2h-1zM112 385h1v2h-1zM113 386h1v2h-1zM114 387h1v2h-1zM115 388h1v1h-1zM116 388h1v2h-1zM117 389h1v2h-1zM118 390h1v2h-1zM119 391h1v2h-1zM120 392h1v2h-1zM121 393h1v1h-1zM122 393h1v2h-1zM123 394h1v2h-1zM124 395h1v2h-1zM125 396h1v1h-1zM126 396h1v2h-1zM127 397h1v2h-1zM128 398h1v2h-1zM129 399h1v1h-1zM130 399h1v2h-1zM131 400h1v2h-1zM132 401h1v2h-1zM133 402h1v1h-1zM134 402h1v2h-1zM135 403h1v2h-1zM136 404h1v1h-1zM137 404h1v2h-1zM138 405h1v2h-1zM139 406h1v1h-1zM140 406h1v2h-1zM141 407h1v2h-1zM142 408h1v1h-1zM143 408h1v2h-1zM144 409h1v2h-1zM145 410h1v1h-1zM146 410h1v2h-1zM147 411h1v1h-1zM148 411h1v2h-1zM149 412h1v2h-1zM150 413h1v1h-1zM151 413h1v2h-1zM152 414h1v1h-1zM153 414h1v2h-1zM154 415h1v1h-1zM155 415h1v2h-1zM156 416h1v2h-1zM157 417h1v1h-1zM158 417h1v2h-1zM159 418h1v1h-1zM160 418h1v2h-1zM161 419h1v1h-1zM162 419h1v2h-1zM163 420h1v1h-1zM164 420h1v2h-1zM165 421h1v1h-1zM166 421h1v2h-1zM167 422h1v1h-1zM168 422h1v2h-1zM169 423h1v1h-1zM170 423h1v2h-1zM171 424h1v1h-1zM172 424h1v2h-1zM173 425h1v1h-1zM174 425h1v2h-1zM175 426h1v1h-1zM176 426h1v1h-1zM177 426h1v2h-1zM178 427h1v1h-1zM179 427h1v2h-1zM180 428h1v1h-1zM181 428h1v2h-1zM182 429h1v1h-1zM183 429h1v1h-1zM184 429h1v2h-1zM185 430h1v1h-1zM186 430h1v2h-1zM187 431h1v1h-1zM188 431h1v1h-1zM189 431h1v2h-1zM190 432h1v1h-1zM191 432h1v1h-1zM192 432h1v2h-1zM193 433h1v1h-1zM194 433h1v2h-1zM195 434h1v1h-1zM196 434h1v1h-1zM197 434h1v2h-1zM198 435h1v1h-1zM199 435h1v1h-1zM200 435h1v2h-1zM201 436h1v1h-1zM202 436h1v1h-1zM203 436h1v2h-1zM204 437h1v1h-1zM205 437h1v1h-1zM206 437h1v2h-1zM207 438h1v1h-1zM208 438h1v1h-1zM209 438h1v2h-1zM210 439h1v1h-1zM211 439h1v1h-1zM212 439h1v1h-1zM213 439h1v2h-1zM214 440h1v1h-1zM215 440h1v1h-1zM216 440h1v2h-1zM217 441h1v1h-1zM218 441h1v1h-1zM219 441h1v1h-1zM220 441h1v2h-1zM221 442h1v1h-1zM222 442h1v1h-1zM223 442h1v2h-1zM224 443h1v1h-1zM225 443h1v1h-1zM226 443h1v1h-1zM227 443h1v2h-1zM228 444h1v1h-1zM229 444h1v1h-1zM230 444h1v1h-1zM231 444h1v2h-1zM232 445h1v1h-1zM233 445h1v1h-1zM234 445h1v1h-1zM235 445h1v1h-1zM236 445h1v2h-1zM237 446h1v1h-1zM238 446h1v1h-1zM239 446h1v1h-1zM240 446h1v2h-1zM241 447h1v1h-1zM242 447h1v1h-1zM243 447h1v1h-1zM244 447h1v1h-1zM245 447h1v2h-1zM246 448h1v1h-1zM247 448h1v1h-1zM248 448h1v1h-1zM249 448h1v1h-1zM250 448h1v2h-1zM251 449h1v1h-1zM252 449h1v1h-1zM253 449h1v1h-1zM254 449h1v1h-1zM255 449h1v1h-1zM256 449h1v2h-1zM257 450h1v1h-1zM258 450h1v1h-1zM259 450h1v1h-1zM260 450h1v1h-1zM261 450h1v2h-1zM262 451h1v1h-1zM263 451h1v1h-1zM264 451h1v1h-1zM265 451h1v1h-1zM266 451h1v1h-1zM267 451h1v2h-1zM268 452h1v1h-1zM269 452h1v1h-1zM270 452h1v1h-1zM271 452h1v1h-1zM272 452h1v1h-1zM273 452h1v1h-1zM274 452h1v2h-1zM275 453h1v1h-1zM276 453h1v1h-1zM277 453h1v1h-1zM278 453h1v1h-1zM279 453h1v1h-1zM280 453h1v1h-1zM281 453h1v2h-1zM282 454h1v1h-1zM283 454h1v1h-1zM284 454h1v1h-1zM285 454h1v1h-1zM286 454h1v1h-1zM287 454h1v1h-1zM288 454h1v1h-1zM289 454h1v2h-1zM290 455h1v1h-1zM291 455h1v1h-1zM292 455h1v1h-1zM293 455h1v1h-1zM294 455h1v1h-1zM295 455h1v1h-1zM296 455h1v1h-1zM297 455h1v2h-1zM298 456h1v1h-1zM299 456h1v1h-1zM300 456h1v1h-1zM301 456h1v1h-1zM302 456h1v1h-1zM303 456h1v1h-1zM304 456h1v1h-1zM305 456h1v1h-1zM306 456h1v1h-1zM307 456h1v2h-1zM308 457h1v1h-1zM309 457h1v1h-1zM310 457h1v1h-1zM311 457h1v1h-1zM312 457h1v1h-1zM313 457h1v1h-1zM314 457h1v1h-1zM315 457h1v1h-1zM316 457h1v1h-1zM317 457h1v1h-1zM318 457h1v2h-1zM319 458h1v1h-1zM320 458h1v1h-1zM321 458h1v1h-1zM322 458h1v1h-1zM323 458h1v1h-1zM324 458h1v1h-1zM325 458h1v1h-1zM326 458h1v1h-1zM327 458h1v1h-1zM328 458h1v1h-1zM329 458h1v1h-1zM330 458h1v2h-1zM331 459h1v1h-1zM332 459h1v1h-1zM333 459h1v1h-1zM334 459h1v1h-1zM335 459h1v1h-1zM336 459h1v1h-1zM337 459h1v1h-1zM338 459h1v1h-1zM339 459h1v1h-1zM340 459h1v1h-1zM341 459h1v1h-1zM342 459h1v1h-1zM343 459h1v1h-1zM344 459h1v2h-1zM345 460h1v1h-1zM346 460h1v1h-1zM347 460h1v1h-1zM348 460h1v1h-1zM349 460h1v1h-1zM350 460h1v1h-1zM351 460h1v1h-1zM352 460h1v1h-1zM353 460h1v1h-1zM354 460h1v1h-1zM355 460h1v1h-1zM356 460h1v1h-1zM357 460h1v1h-1zM358 460h1v1h-1zM359 460h1v1h-1zM360 460h1v1h-1zM361 460h1v1h-1zM362 460h1v2h-1zM363 461h1v1h-1zM364 461h1v1h-1zM365 461h1v1h-1zM366 461h1v1h-1zM367 461h1v1h-1zM368 461h1v1h-1zM369 461h1v1h-1zM370 461h1v1h-1zM371 461h1v1h-1zM372 461h1v1h-1zM373 461h1v1h-1zM374 461h1v1h-1zM375 461h1v1h-1zM376 461h1v1h-1zM377 461h1v1h-1zM378 461h1v1h-1zM379 461h1v1h-1zM380 461h1v1h-1zM381 461h1v1h-1zM382 461h1v1h-1zM383 461h1v2h-1zM384 462h1v1h-1zM385 462h1v1h-1zM386 462h1v1h-1zM387 462h1v1h-1zM388 462h1v1h-1zM389 462h1v1h-1zM390 462h1v1h-1zM391 462h1v1h-1zM392 462h1v1h-1zM393 462h1v1h-1zM394 462h1v1h-1zM395 462h1v1h-1zM396 462h1v1h-1zM397 462h1v1h-1zM398 462h1v1h-1zM399 462h1v1h-1zM400 462h1v1h-1zM401 462h1v1h-1zM402 462h1v1h-1zM403 462h1v1h-1zM404 462h1v1h-1zM405 462h1v1h-1zM406 462h1v1h-1zM407 462h1v1h-1zM408 462h1v1h-1zM409 462h1v1h-1zM410 462h1v1h-1zM411 462h1v1h-1zM412 462h1v1h-1zM413 462h1v2h-1zM414 463h1v1h-1zM415 463h1v1h-1zM416 463h1v1h-1zM417 463h1v1h-1zM418 463h1v1h-1zM419 463h1v1h-1zM420 463h1v1h-1zM421 463h1v1h-1zM422 463h1v1h-1zM423 463h1v1h-1zM424 463h1v1h-1zM425 463h1v1h-1zM426 463h1v1h-1zM427 463h1v1h-1zM428 463h1v1h-1zM429 463h1v1h-1zM430 463h1v1h-1zM431 463h1v1h-1zM432 463h1v1h-1zM433 463h1v1h-1zM434 463h1v1h-1zM435 463h1v1h-1zM436 463h1v1h-1zM437 463h1v1h-1zM438 463h1v1h-1zM439 463h1v1h-1zM440 463h1v1h-1zM441 463h1v1h-1zM442 463h1v1h-1zM443 463h1v1h-1zM444 463h1v1h-1zM445 463h1v1h-1zM446 463h1v1h-1zM447 463h1v1h-1zM448 463h1v1h-1zM449 463h1v1h-1zM450 463h1v1h-1zM451 463h1v1h-1zM452 463h1v1h-1zM453 463h1v1h-1zM454 463h1v1h-1zM455 463h1v1h-1zM456 463h1v1h-1zM457 463h1v1h-1zM458 463h1v1h-1zM459 463h1v2h-1zM460 464h1v1h-1zM461 464h1v1h-1zM462 464h1v1h-1zM463 464h1v1h-1zM464 464h1v1h-1zM465 464h1v1h-1zM466 464h1v1h-1zM467 464h1v1h-1zM468 464h1v1h-1zM469 464h1v1h-1zM470 464h1v1h-1zM471 464h1v1h-1zM472 464h1v1h-1zM473 464h1v1h-1zM474 464h1v1h-1zM475 464h1v1h-1zM476 464h1v1h-1zM477 464h1v1h-1zM478 464h1v1h-1zM479 464h1v1h-1zM480 464h1v1h-1zM481 464h1v1h-1zM482 464h1v1h-1zM483 464h1v1h-1zM484 464h1v1h-1zM485 464h1v1h-1zM486 464h1v1h-1zM487 464h1v1h-1zM488 464h1v1h-1zM489 464h1v1h-1zM490 464h1v1h-1zM491 464h1v1h-1zM492 464h1v1h-1zM493 464h1v1h-1zM494 464h1v1h-1zM495 464h1v1h-1zM496 464h1v1h-1zM497 464h1v1h-1zM498 464h1v1h-1zM499 464h1v1h-1zM500 464h1v1h-1zM501 464h1v1h-1zM502 464h1v1h-1zM503 464h1v1h-1zM504 464h1v1h-1zM505 464h1v1h-1zM506 464h1v1h-1zM507 464h1v1h-1zM508 464h1v1h-1zM509 464h1v1h-1zM510 464h1v1h-1zM511 464h1v1h-1zM512 464h1v1h-1zM513 464h1v1h-1zM514 464h1v1h-1zM515 464h1v1h-1zM516 464h1v1h-1zM517 464h1v1h-1zM518 464h1v1h-1zM519 464h1v1h-1zM520 464h1v1h-1zM521 464h1v1h-1zM522 464h1v1h-1zM523 464h1v1h-1zM524 464h1v1h-1zM525 464h1v1h-1zM526 464h1v1h-1zM527 464h1v1h-1zM528 464h1v1h-1zM529 464h1v1h-1zM530 464h1v1h-1zM531 464h1v1h-1zM532 464h1v1h-1zM533 464h1v1h-1zM534 464h1v1h-1zM535 464h1v1h-1zM536 464h1v1h-1zM537 464h1v1h-1zM538 464h1v1h-1zM539 464h1v1h-1zM540 464h1v1h-1zM541 464h1v1h-1zM542 464h1v1h-1zM543 464h1v1h-1zM544 464h1v1h-1zM545 464h1v1h-1zM546 464h1v1h-1zM547 464h1v1h-1zM548 464h1v1h-1zM549 464h1v1h-1zM550 464h1v1h-1zM551 464h1v1h-1zM552 464h1v1h-1zM553 464h1v1h-1zM554 464h1v1h-1zM555 464h1v1h-1zM556 464h1v1h-1zM557 464h1v1h-1zM558 464h1v1h-1zM559 464h1v1h-1zM560 464h1v1h-1zM561 464h1v1h-1zM562 464h1v1h-1zM563 464h1v1h-1zM564 464h1v2h-1zM565 465h1v1h-1zM566 465h1v1h-1zM567 465h1v1h-1zM568 465h1v1h-1zM569 465h1v1h-1zM570 465h1v1h-1zM571 465h1v1h-1zM572 465h1v1h-1zM573 465h1v1h-1zM574 465h1v1h-1zM575 465h1v1h-1zM576 465h1v1h-1zM577 465h1v1h-1zM578 465h1v1h-1zM579 465h1v1h-1zM580 465h1v1h-1zM581 465h1v1h-1zM582 465h1v1h-1zM583 465h1v1h-1zM584 465h1v1h-1zM585 465h1v1h-1zM586 465h1v1h-1zM587 465h1v1h-1zM588 465h1v1h-1zM589 465h1v1h-1zM590 465h1v1h-1zM591 465h1v1h-1zM592 465h1v1h-1zM593 465h1v1h-1zM594 465h1v1h-1zM595 465h1v1h-1zM596 465h1v1h-1zM597 465h1v1h-1zM598 465h1v1h-1zM599 465h1v1h-1zM600 465h1v1h-1zM601 465h1v1h-1zM602 465h1v1h-1zM603 465h1v1h-1zM604 465h1v1h-1zM605 465h1v1h-1zM606 465h1v1h-1zM607 465h1v1h-1zM608 465h1v1h-1zM609 465h1v1h-1zM610 465h1v1h-1zM611 465h1v1h-1zM612 465h1v1h-1zM613 465h1v1h-1zM614 465h1v1h-1zM615 465h1v1h-1zM616 465h1v1h-1zM617 465h1v1h-1zM618 465h1v1h-1zM619 465h1v1h-1zM620 465h1v1h-1zM621 465h1v1h-1zM622 465h1v1h-1zM623 465h1v1h-1zM624 465h1v1h-1zM625 465h1v1h-1zM626 465h1v1h-1zM627 465h1v1h-1zM628 465h1v1h-1zM629 465h1v1h-1zM630 465h1v1h-1zM631 465h1v1h-1zM632 465h1v1h-1zM633 465h1v1h-1zM634 465h1v1h-1zM635 465h1v1h-1zM636 465h1v1h-1zM637 465h1v1h-1zM638 465h1v1h-1zM639 465h1v1h-1zM640 465h1v1h-1zM641 465h1v1h-1zM642 465h1v1h-1zM643 465h1v1h-1zM644 465h1v1h-1zM645 465h1v1h-1zM646 465h1v1h-1zM647 465h1v1h-1zM648 465h1v1h-1zM649 465h1v1h-1zM650 465h1v1h-1zM651 465h1v1h-1zM652 465h1v1h-1zM653 465h1v1h-1zM654 465h1v1h-1zM655 465h1v1h-1zM656 465h1v1h-1zM657 465h1v1h-1zM658 465h1v1h-1zM659 465h1v1h-1zM660 465h1v1h-1zM661 465h1v1h-1zM662 465h1v1h-1zM663 465h1v1h-1zM664 465h1v1h-1zM665 465h1v1h-1zM666 465h1v1h-1zM667 465h1v1h-1zM668 465h1v1h-1zM669 465h1v1h-1zM670 465h1v1h-1zM671 465h1v1h-1zM672 465h1v1h-1zM673 465h1v1h-1zM674 465h1v1h-1zM675 465h1v1h-1zM676 465h1v1h-1zM677 465h1v1h-1zM678 465h1v1h-1zM679 465h1v1h-1zM680 465h1v1h-1zM681 465h1v1h-1zM682 465h1v1h-1zM683 465h1v1h-1zM684 465h1v1h-1zM685 465h1v1h-1zM686 465h1v1h-1zM687 465h1v1h-1zM688 465h1v1h-1zM689 465h1v1h-1zM690 465h1v1h-1zM691 465h1v1h-1zM692 465h1v1h-1zM693 465h1v1h-1zM694 465h1v1h-1zM695 465h1v1h-1zM696 465h1v1h-1zM697 465h1v1h-1zM698 465h1v1h-1zM699 465h1v1h-1zM700 465h1v1h-1zM701 465h1v1h-1zM702 465h1v1h-1zM703 465h1v1h-1zM704 465h1v1h-1zM705 465h1v1h-1zM706 465h1v1h-1zM707 465h1v1h-1zM708 465h1v1h-1zM709 465h1v1h-1zM710 465h1v1h-1zM711 465h1v1h-1zM712 465h1v1h-1zM713 465h1v1h-1zM714 465h1v1h-1zM715 465h1v1h-1zM716 465h1v1h-1zM717 465h1v1h-1zM718 465h1v1h-1zM719 465h1v1h-1zM720 465h1v1h-1zM721 465h1v1h-1zM722 465h1v1h-1zM723 465h1v1h-1zM724 465h1v1h-1zM725 465h1v1h-1zM726 465h1v2h-1zM727 466h1v1h-1zM728 466h1v1h-1zM729 466h1v1h-1zM730 466h1v1h-1zM731 466h1v1h-1zM732 466h1v1h-1zM733 466h1v1h-1zM734 466h1v1h-1zM735 466h1v1h-1zM736 466h1v1h-1zM737 466h1v1h-1zM738 466h1v1h-1zM739 466h1v1h-1zM740 466h1v1h-1zM741 466h1v1h-1zM742 466h1v1h-1zM743 466h1v1h-1zM744 466h1v1h-1zM745 466h1v1h-1zM746 466h1v1h-1zM747 466h1v1h-1zM748 466h1v1h-1zM749 466h1v1h-1zM750 466h1v1h-1zM751 466h1v1h-1zM752 466h1v1h-1zM753 466h1v1h-1zM754 466h1v1h-1zM755 466h1v1h-1zM756 466h1v1h-1zM757 466h1v1h-1zM758 466h1v1h-1zM759 466h1v1h-1zM760 466h1v1h-1zM761 466h1v1h-1zM762 466h1v1h-1zM763 466h1v1h-1zM764 466h1v2h-1zM765 467h1v1h-1zM766 467h1v1h-1zM767 467h1v1h-1zM768 467h1v1h-1zM769 467h1v1h-1zM770 467h1v1h-1zM771 467h1v1h-1zM772 467h1v1h-1zM773 467h1v1h-1zM774 467h1v1h-1zM775 467h1v1h-1zM776 467h1v1h-1zM777 467h1v1h-1zM778 467h1v1h-1zM779 467h1v1h-1zM780 467h1v1h-1zM781 467h1v1h-1zM782 467h1v1h-1zM783 467h1v1h-1zM784 467h1v2h-1zM785 468h1v1h-1zM786 468h1v1h-1zM787 468h1v1h-1zM788 468h1v1h-1zM789 468h1v1h-1zM790 468h1v1h-1zM791 468h1v1h-1zM792 468h1v1h-1zM793 468h1v1h-1zM794 468h1v1h-1zM795 468h1v1h-1zM796 468h1v1h-1zM797 468h1v2h-1zM798 469h1v1h-1zM799 469h1v1h-1zM800 469h1v1h-1zM801 469h1v1h-1zM802 469h1v1h-1zM803 469h1v1h-1zM804 469h1v1h-1zM805 469h1v1h-1zM806 469h1v1h-1zM807 469h1v2h-1zM808 470h1v1h-1zM809 470h1v1h-1zM810 470h1v1h-1zM811 470h1v1h-1zM812 470h1v1h-1zM813 470h1v1h-1zM814 470h1v1h-1zM815 470h1v1h-1zM816 470h1v2h-1zM817 471h1v1h-1zM818 471h1v1h-1zM819 471h1v1h-1zM820 471h1v1h-1zM821 471h1v1h-1zM822 471h1v1h-1zM823 471h1v2h-1zM824 472h1v1h-1zM825 472h1v1h-1zM826 472h1v1h-1zM827 472h1v1h-1zM828 472h1v1h-1zM829 472h1v2h-1zM830 473h1v1h-1zM831 473h1v1h-1zM832 473h1v1h-1zM833 473h1v1h-1zM834 473h1v2h-1zM835 474h1v1h-1zM836 474h1v1h-1zM837 474h1v1h-1zM838 474h1v1h-1zM839 474h1v2h-1zM840 475h1v1h-1zM841 475h1v1h-1zM842 475h1v1h-1zM843 475h1v2h-1zM844 476h1v1h-1zM845 476h1v1h-1zM846 476h1v1h-1zM847 476h1v2h-1zM848 477h1v1h-1zM849 477h1v1h-1zM850 477h1v2h-1zM851 478h1v1h-1zM852 478h1v1h-1zM853 478h1v1h-1zM854 478h1v2h-1zM855 479h1v1h-1zM856 479h1v1h-1zM857 479h1v2h-1zM858 480h1v1h-1zM859 480h1v1h-1zM860 480h1v2h-1zM861 481h1v1h-1z" fill="#00ff00"/>
<rect x="8" y="609" width="881" height="1" fill="#a0a0a0" />
<rect x="8" y="610" width="881" height="18" fill="#ffffff" />
<rect x="9" y="611" width="879" height="16" fill="#f0ecea" />
<rect x="869" y="611" width="1" height="16" fill="#c8c8c8" />
<rect x="886" y="619" width="2" height="2" fill="#ffffff" />
<rect x="886" y="619" width="1" height="1" fill="#7a7a7a" />
<rect x="887" y="619" width="1" height="1" fill="#a8a8a8" />
<rect x="886" y="620" width="1" height="1" fill="#a8a8a8" />
<rect x="883" y="622" width="2" height="2" fill="#ffffff" />
<rect x="883" y="622" width="1" height="1" fill="#7a7a7a" />
<rect x="884" y="622" width="1" height="1" fill="#a8a8a8" />
<rect x="883" y="623" width="1" height="1" fill="#a8a8a8" />
<rect x="886" y="622" width="2" height="2" fill="#ffffff" />
<rect x="886" y="622" width="1" height="1" fill="#7a7a7a" />
<rect x="887" y="622" width="1" height="1" fill="#a8a8a8" />
<rect x="886" y="623" width="1" height="1" fill="#a8a8a8" />
<rect x="880" y="625" width="2" height="2" fill="#ffffff" />
<rect x="880" y="625" width="1" height="1" fill="#7a7a7a" />
<rect x="881" y="625" width="1" height="1" fill="#a8a8a8" />
<rect x="880" y="626" width="1" height="1" fill="#a8a8a8" />
<rect x="883" y="625" width="2" height="2" fill="#ffffff" />
<rect x="883" y="625" width="1" height="1" fill="#7a7a7a" />
<rect x="884" y="625" width="1" height="1" fill="#a8a8a8" />
<rect x="883" y="626" width="1" height="1" fill="#a8a8a8" />
<rect x="886" y="625" width="2" height="2" fill="#ffffff" />
<rect x="886" y="625" width="1" height="1" fill="#7a7a7a" />
<rect x="887" y="625" width="1" height="1" fill="#a8a8a8" />
<rect x="886" y="626" width="1" height="1" fill="#a8a8a8" />
<text x="9" y="625" font-family="Liberation Sans" font-size="12" font-weight="normal" fill="#000" text-anchor="start" textLength="64" lengthAdjust="spacingAndGlyphs" >x = 1.65KHz</text>
<text x="83" y="625" font-family="Liberation Sans" font-size="12" font-weight="normal" fill="#000" text-anchor="start" textLength="98" lengthAdjust="spacingAndGlyphs" >y = 107.37nV/Hz½</text>
<clipPath id="tbclip"><rect x="8" y="49" width="881" height="29"/></clipPath><g clip-path="url(#tbclip)">
<rect x="69" y="55" width="1" height="18" fill="#a0a0a0" />
<rect x="100" y="55" width="1" height="18" fill="#a0a0a0" />
<rect x="131" y="55" width="1" height="18" fill="#a0a0a0" />
<rect x="185" y="55" width="1" height="18" fill="#a0a0a0" />
<rect x="285" y="55" width="1" height="18" fill="#a0a0a0" />
<rect x="339" y="55" width="1" height="18" fill="#a0a0a0" />
<rect x="416" y="55" width="1" height="18" fill="#a0a0a0" />
<rect x="516" y="55" width="1" height="18" fill="#a0a0a0" />
<rect x="570" y="55" width="1" height="18" fill="#a0a0a0" />
<defs><pattern id="ydith" x="0" y="0" width="2" height="2" patternUnits="userSpaceOnUse"><rect width="2" height="2" fill="#ffffff"/><rect width="1" height="1" fill="#ffff00"/><rect x="1" y="1" width="1" height="1" fill="#ffff00"/></pattern><pattern id="gdith" x="0" y="0" width="2" height="2" patternUnits="userSpaceOnUse"><rect width="2" height="2" fill="#ffffff"/><rect width="1" height="1" fill="#b0b0b0"/><rect x="1" y="1" width="1" height="1" fill="#b0b0b0"/></pattern><linearGradient id="hamg" x1="0" y1="0" x2="0" y2="1"><stop offset="0" stop-color="#ffffff"/><stop offset="1" stop-color="#a8a8a8"/></linearGradient></defs>
<g transform="translate(24,55)"><path d="M1.5 1.5H11.5L14.5 4.5V15.5H1.5Z" fill="#fff" stroke="#000"/><path d="M11.5 1.5V4.5H14.5" fill="none" stroke="#000"/><path d="M2 12L5.5 7.5L7 6.5L7.5 6H8.5L9 6.5L9.5 6H14.5L12.5 8.5L10.5 10.5L9 11L8.5 12H7.5L7 11.5L6.5 12Z" fill="#f00"/><path d="M6 9.2L7.5 7.6L9 9.2L7.5 10.6Z" fill="#fff"/></g>
<g transform="translate(47,55)"><path d="M1.5 13.5V5.5L2.5 4.5H5.5L6.5 5.5H11.5V8.5" fill="url(#ydith)" stroke="#000"/><path d="M1.5 13.5L5.5 8.5H16L12 13.5Z" fill="#808000" stroke="#000"/><path d="M9 3Q11.5 0 14.5 3" fill="none" stroke="#000" stroke-width="1.1"/><path d="M16.2 1.8V4.8H13.2Z" fill="#000"/></g>
<g transform="translate(78,55)"><rect x="1" y="1" width="14" height="14" fill="#000"/><rect x="2" y="2" width="1" height="11" fill="#808000"/><rect x="3" y="8" width="1" height="5" fill="#808000"/><rect x="13" y="4" width="1" height="9" fill="#808000"/><rect x="3" y="9" width="10" height="1" fill="#808000"/><rect x="4" y="2" width="8" height="6" fill="#fff"/><rect x="5" y="3" width="6" height="4" fill="#ececec"/><rect x="10" y="10" width="2" height="4" fill="#fff"/><rect x="13" y="2" width="1" height="1" fill="#fff"/></g>
<g transform="translate(109,55)"><path d="M0.5 2.5H3L3.5 3.5H5L6 1.5H11L12 2.5L15.5 5.5V8.5L14 6.5H11.5L11 7.5H5L4 6.5H3L2.5 7.5H0.5Z" fill="url(#hamg)" stroke="#000"/><rect x="7" y="8" width="4" height="4" fill="#0000c8"/><rect x="6" y="12" width="5" height="4" fill="#0000c8"/><rect x="9" y="8" width="2" height="8" fill="#0000ff"/><rect x="6" y="12" width="1" height="4" fill="#000090"/></g>
<g transform="translate(140,55)"><g fill="none" stroke="#000" stroke-linecap="square"><path d="M12.5 4L7.5 10" stroke-width="2.2"/><path d="M5 5.5L7 4.5H9" stroke-width="1.3"/><path d="M11 7.5H13.5L14.5 6.5" stroke-width="1.3"/><path d="M7.5 10L4 11.5H1" stroke-width="1.5"/><path d="M8.5 10.5L9.5 13L8.5 15" stroke-width="1.5"/></g><rect x="10" y="1" width="5" height="3" fill="#000"/><rect x="11" y="2" width="1" height="1" fill="#fff"/><path d="M0.5 4.5L3 3M2 6.5L4.5 5M3 1.5L4.5 1" stroke="#888" stroke-width="0.8" fill="none"/></g>
<g transform="translate(163,55)"><path d="M3.5 15.5L0.5 10.5L1.5 9.5L3.5 11.5V3.5L4.5 2.5L5.5 3.5V1.5L6.5 0.5L7.5 1.5L8.5 0.5L9.5 1.5V2.5L10.5 1.5L11.5 2.5V4.5L12.5 3.5L13.5 4.5V12.5L12.5 15.5Z" fill="#f0f0f0" stroke="#a0a0a0"/><path d="M5.5 3.5V8.5M7.5 1.5V8.5M9.5 2.5V8.5M11.5 4.5V8.5" stroke="#a0a0a0" fill="none"/></g>
<g transform="translate(194,55)"><path d="M10.5 10.5L14.5 14.5" stroke="#000" stroke-width="2.6" stroke-linecap="round"/><circle cx="6.5" cy="6.5" r="5" fill="#fff" stroke="#000" stroke-width="1.6"/><path d="M3.5 5Q4.5 3.5 6 3M9.5 8Q8.8 9.5 7.5 10" stroke="#00e0ff" stroke-width="1.2" fill="none"/><path d="M6.5 3.5V9.5M3.5 6.5H9.5" stroke="#000" stroke-width="1.4"/></g>
<g transform="translate(217,55)"><path d="M10.5 10.5L14.5 14.5" stroke="#000" stroke-width="2.6" stroke-linecap="round"/><circle cx="6.5" cy="6.5" r="5" fill="#fff" stroke="#000" stroke-width="1.6"/><path d="M3.5 5Q4.5 3.5 6 3M9.5 8Q8.8 9.5 7.5 10" stroke="#00e0ff" stroke-width="1.2" fill="none"/></g>
<g transform="translate(240,55)"><path d="M10.5 10.5L14.5 14.5" stroke="#000" stroke-width="2.6" stroke-linecap="round"/><circle cx="6.5" cy="6.5" r="5" fill="#fff" stroke="#000" stroke-width="1.6"/><path d="M3.5 5Q4.5 3.5 6 3M9.5 8Q8.8 9.5 7.5 10" stroke="#00e0ff" stroke-width="1.2" fill="none"/><path d="M3.5 6.5H9.5" stroke="#000" stroke-width="1.4"/></g>
<g transform="translate(263,55)"><path d="M10.5 10.5L14.5 14.5" stroke="#000" stroke-width="2.6" stroke-linecap="round"/><circle cx="6.5" cy="6.5" r="5" fill="#fff" stroke="#000" stroke-width="1.6"/><path d="M3.5 5Q4.5 3.5 6 3M9.5 8Q8.8 9.5 7.5 10" stroke="#00e0ff" stroke-width="1.2" fill="none"/><path d="M0.5 1L9.5 14M12.5 1.5L0.5 11" stroke="#ff0000" stroke-width="1.4"/></g>
<g transform="translate(294,55)"><rect x="1" y="1" width="1" height="15" fill="#000"/><rect x="0" y="14" width="17" height="1" fill="#000"/><rect x="0" y="2" width="1" height="1" fill="#000"/><rect x="0" y="4" width="1" height="1" fill="#000"/><rect x="0" y="6" width="1" height="1" fill="#000"/><rect x="0" y="8" width="1" height="1" fill="#000"/><rect x="0" y="10" width="1" height="1" fill="#000"/><rect x="0" y="12" width="1" height="1" fill="#000"/><rect x="0" y="14" width="1" height="1" fill="#000"/><rect x="2" y="15" width="1" height="1" fill="#000"/><rect x="4" y="15" width="1" height="1" fill="#000"/><rect x="6" y="15" width="1" height="1" fill="#000"/><rect x="8" y="15" width="1" height="1" fill="#000"/><rect x="10" y="15" width="1" height="1" fill="#000"/><rect x="12" y="15" width="1" height="1" fill="#000"/><rect x="14" y="15" width="1" height="1" fill="#000"/><rect x="16" y="15" width="1" height="1" fill="#000"/><path d="M2 4.5L6 1L9.5 4.5L13 1L16 4.5" stroke="#0000a0" stroke-width="1" fill="none"/><path d="M2 7.5H3.5L5 6.5H7L8.5 7.5H10L11.5 8.5H13L14.5 7.5H16" stroke="#ff0000" stroke-width="1.2" fill="none"/><path d="M2 11H6.5L7.5 12H9L10 11H13.5L14.5 12H16" stroke="#0000a0" stroke-width="1.5" fill="none"/></g>
<g transform="translate(317,55)"><rect x="1" y="1" width="1" height="15" fill="#000"/><rect x="0" y="14" width="17" height="1" fill="#000"/><rect x="0" y="2" width="1" height="1" fill="#000"/><rect x="0" y="4" width="1" height="1" fill="#000"/><rect x="0" y="6" width="1" height="1" fill="#000"/><rect x="0" y="8" width="1" height="1" fill="#000"/><rect x="0" y="10" width="1" height="1" fill="#000"/><rect x="0" y="12" width="1" height="1" fill="#000"/><rect x="0" y="14" width="1" height="1" fill="#000"/><rect x="2" y="15" width="1" height="1" fill="#000"/><rect x="4" y="15" width="1" height="1" fill="#000"/><rect x="6" y="15" width="1" height="1" fill="#000"/><rect x="8" y="15" width="1" height="1" fill="#000"/><rect x="10" y="15" width="1" height="1" fill="#000"/><rect x="12" y="15" width="1" height="1" fill="#000"/><rect x="14" y="15" width="1" height="1" fill="#000"/><rect x="16" y="15" width="1" height="1" fill="#000"/><path d="M5 4Q7 2 10.5 1M5 10Q7 12 10.5 13" stroke="#ff0000" stroke-width="1" fill="none"/><path d="M4.5 5.5V9.5M13 1.5V12.5" stroke="#000" stroke-width="1"/><path d="M3 6.5L4.5 5L6 6.5M3 8.5L4.5 10L6 8.5M11 3L13 1L15 3M11 11L13 13L15 11" stroke="#000" stroke-width="1" fill="none"/></g>
<g transform="translate(348,55)"><rect x="0" y="1" width="16" height="7" fill="#000080"/><rect x="1" y="4" width="14" height="3" fill="#fff"/><rect x="1" y="2" width="1" height="1" fill="#fff"/><rect x="13" y="2" width="1" height="1" fill="#fff"/><rect x="14" y="2" width="1" height="1" fill="#fff"/><rect x="0" y="8" width="16" height="8" fill="#000080"/><rect x="1" y="11" width="14" height="4" fill="#fff"/><rect x="1" y="9" width="1" height="1" fill="#fff"/><rect x="13" y="9" width="1" height="1" fill="#fff"/><rect x="14" y="9" width="1" height="1" fill="#fff"/></g>
<g transform="translate(371,55)"><rect x="0" y="1" width="9" height="8" fill="#000080"/><rect x="1" y="4" width="7" height="4" fill="#fff"/><rect x="1" y="2" width="1" height="1" fill="#fff"/><rect x="6" y="2" width="1" height="1" fill="#fff"/><rect x="7" y="2" width="1" height="1" fill="#fff"/><rect x="3" y="5" width="9" height="7" fill="#000080"/><rect x="4" y="8" width="7" height="3" fill="#fff"/><rect x="4" y="6" width="1" height="1" fill="#fff"/><rect x="9" y="6" width="1" height="1" fill="#fff"/><rect x="10" y="6" width="1" height="1" fill="#fff"/><rect x="6" y="9" width="10" height="7" fill="#000080"/><rect x="7" y="12" width="8" height="3" fill="#fff"/><rect x="7" y="10" width="1" height="1" fill="#fff"/><rect x="13" y="10" width="1" height="1" fill="#fff"/><rect x="14" y="10" width="1" height="1" fill="#fff"/></g>
<g transform="translate(394,55)"><rect x="0" y="1" width="9" height="8" fill="#000080"/><rect x="1" y="4" width="7" height="4" fill="#fff"/><rect x="1" y="2" width="1" height="1" fill="#fff"/><rect x="6" y="2" width="1" height="1" fill="#fff"/><rect x="7" y="2" width="1" height="1" fill="#fff"/><rect x="3" y="5" width="9" height="7" fill="#000080"/><rect x="4" y="8" width="7" height="3" fill="#fff"/><rect x="4" y="6" width="1" height="1" fill="#fff"/><rect x="9" y="6" width="1" height="1" fill="#fff"/><rect x="10" y="6" width="1" height="1" fill="#fff"/><rect x="6" y="9" width="10" height="7" fill="#000080"/><rect x="7" y="12" width="8" height="3" fill="#fff"/><rect x="7" y="10" width="1" height="1" fill="#fff"/><rect x="13" y="10" width="1" height="1" fill="#fff"/><rect x="14" y="10" width="1" height="1" fill="#fff"/><rect x="8" y="12" width="4" height="1" fill="#000"/><path d="M11.5 1.5V5M11.5 1.5H15M11.5 1.5L15.5 5.5" stroke="#000" stroke-width="1.1" fill="none"/></g>
<g transform="translate(425,55)"><path d="M5.5 1L8.5 8.5M10.5 1L7.5 8.5" stroke="#000" stroke-width="1.2" fill="none"/><circle cx="6" cy="12" r="2.2" fill="none" stroke="#0000a0" stroke-width="1.3"/><circle cx="10.5" cy="12" r="2.2" fill="none" stroke="#0000a0" stroke-width="1.3"/><path d="M6.5 9.8L7.8 8L9.5 9.8" stroke="#0000a0" stroke-width="1.1" fill="none"/></g>
<g transform="translate(448,55)"><path d="M1.5 1.5H6.5L8.5 3.5V10.5H1.5Z" fill="#fff" stroke="#000"/><rect x="3" y="4" width="4" height="1" fill="#000"/><rect x="3" y="6" width="4" height="1" fill="#000"/><rect x="3" y="8" width="4" height="1" fill="#000"/><path d="M7.5 4.5H12.5L15.5 7.5V14.5H7.5Z" fill="#fff" stroke="#000080"/><rect x="9" y="8" width="5" height="1" fill="#000"/><rect x="9" y="10" width="5" height="1" fill="#000"/><rect x="9" y="12" width="5" height="1" fill="#000"/></g>
<g transform="translate(471,55)"><rect x="1" y="2" width="13" height="13" rx="2" fill="#a0a0a0"/><rect x="4" y="1" width="7" height="3" fill="#a0a0a0"/><rect x="5" y="4" width="5" height="1" fill="#d8d8d8"/><rect x="8" y="8" width="8" height="7" fill="#d8d8d8"/><path d="M8.5 8.5H15.5V14.5H8.5Z" fill="#e8e8e8" stroke="#a0a0a0"/><rect x="10" y="10" width="3" height="1" fill="#a0a0a0"/><rect x="10" y="12" width="4" height="1" fill="#a0a0a0"/></g>
<g transform="translate(494,55)"><path d="M1 16V8L2 7H3V5H4V2H7V5H8V7H9V5H10V2H13V5H14V7H15L16 8V16H11V13H10V12H7V13H6V16Z" fill="#000"/><rect x="5" y="3" width="1" height="1" fill="#fff"/><rect x="11" y="3" width="1" height="1" fill="#fff"/><rect x="4" y="6" width="1" height="1" fill="#fff"/><rect x="10" y="6" width="1" height="1" fill="#fff"/><rect x="3" y="8" width="1" height="3" fill="#fff"/><rect x="7" y="8" width="1" height="2" fill="#fff"/><rect x="10" y="8" width="1" height="3" fill="#fff"/><rect x="2" y="12" width="1" height="2" fill="#fff"/><rect x="12" y="12" width="1" height="2" fill="#fff"/></g>
<g transform="translate(525,55)"><path d="M5.5 7.5V2.5H13.5L14.5 3.5V7.5" fill="#fff" stroke="#000"/><rect x="7" y="3" width="1" height="1" fill="#b0b0b0"/><rect x="9" y="4" width="1" height="1" fill="#b0b0b0"/><rect x="11" y="3" width="1" height="1" fill="#b0b0b0"/><path d="M1.5 14.5V9.5L3.5 7.5H15.5V14.5Z" fill="url(#gdith)" stroke="#000"/><rect x="5" y="15" width="10" height="1" fill="#000"/><rect x="2" y="9" width="1" height="1" fill="#fff"/></g>
<g transform="translate(548,55)"><path d="M1.5 7L5.5 1.5H14.5L13 7" fill="#fff" stroke="#000"/><rect x="6" y="3" width="6" height="1" fill="#000"/><rect x="5" y="5" width="6" height="1" fill="#000"/><path d="M0.5 8.5H15.5V14.5H0.5Z" fill="#fff" stroke="#000"/><rect x="1" y="10" width="13" height="1" fill="#000"/><rect x="1" y="13" width="13" height="1" fill="#000"/><rect x="1" y="11" width="13" height="2" fill="#fff"/><rect x="7" y="11" width="3" height="1" fill="#ffff00"/><rect x="7" y="12" width="3" height="1" fill="#e8d800"/><rect x="12" y="8" width="1" height="1" fill="#888"/><rect x="13" y="9" width="1" height="1" fill="#888"/><rect x="12" y="10" width="1" height="1" fill="#888"/><rect x="13" y="11" width="1" height="1" fill="#888"/><rect x="12" y="14" width="2" height="1" fill="#888"/><rect x="14" y="9" width="1" height="6" fill="#000"/></g>
<g transform="translate(579,55)"><path d="M4 13L13 2L15.5 3.5L6.5 14Z" fill="#a0a0a0"/><rect x="3" y="14" width="13" height="1" fill="#a0a0a0"/></g>
<g transform="translate(602,55)"><rect x="7" y="1" width="1" height="7" fill="#a0a0a0"/><path d="M0.5 8.5H15L7.5 15.5Z" fill="none" stroke="#a0a0a0" stroke-width="1.2"/></g>
<g transform="translate(625,55)"><rect x="1" y="2" width="14" height="9" rx="1.5" fill="none" stroke="#a0a0a0" stroke-width="1.6"/><rect x="7" y="11" width="1" height="5" fill="#a0a0a0"/><path d="M5.5 9.5V5.5L7.5 3.8L9.5 5.5V9.5M5.5 7.5H9.5" fill="none" stroke="#a0a0a0" stroke-width="1.2"/></g>
<g transform="translate(648,55)"><path d="M7 1.5L13.5 5L2.5 10L7.5 13.5V15" fill="none" stroke="#a0a0a0" stroke-width="1.4"/></g>
<g transform="translate(671,55)"><rect x="7" y="1" width="1" height="6" fill="#a0a0a0"/><rect x="2" y="6" width="12" height="2" fill="#a0a0a0"/><rect x="2" y="10" width="12" height="2" fill="#a0a0a0"/><rect x="7" y="12" width="1" height="4" fill="#a0a0a0"/></g>
<g transform="translate(694,55)"><path d="M5 1.5Q9.5 2 8 6Q6.5 7 8 7.5Q10 10 7 12Q5.5 13 5.5 15" fill="none" stroke="#a0a0a0" stroke-width="1.4"/></g>
<g transform="translate(717,55)"><rect x="7" y="1" width="1" height="15" fill="#a0a0a0"/><path d="M0.5 3.5H15.5L8 10.5Z" fill="none" stroke="#a0a0a0" stroke-width="1.3"/><rect x="1" y="11" width="14" height="1" fill="#a0a0a0"/></g>
<g transform="translate(740,55)"><path d="M3.5 3.5H8.5Q12.5 3.5 12.5 8Q12.5 12.5 8.5 12.5H3.5Z" fill="none" stroke="#a0a0a0" stroke-width="1.5"/><rect x="0" y="5" width="4" height="1" fill="#a0a0a0"/><rect x="0" y="10" width="4" height="1" fill="#a0a0a0"/><rect x="12" y="7" width="4" height="1" fill="#a0a0a0"/><rect x="3" y="3" width="2" height="10" fill="#a0a0a0"/></g>
<g transform="translate(763,55)"><path d="M5.5 15.5H11.5V13.5L15.5 9V6.5L13 2H11L9.5 3L7.5 6.5L5 1.5H3.5L3 3L4 8H2.5L0.5 9V10.5Z" fill="none" stroke="#a0a0a0" stroke-width="1.1"/><path d="M9 8L12 3.5M11 9.5L13.5 5" stroke="#a0a0a0" fill="none"/></g>
<g transform="translate(786,55)"><path d="M4.5 14.5H10.5V12.5L13.5 9.5V6L12.5 5H11.5L10.5 3.5H6L5 5H3.5L1.5 7V8.5L4.5 11.5Z" fill="none" stroke="#a0a0a0" stroke-width="1.1"/><path d="M7.5 4V8M10.5 4V8M5 5V7.5" stroke="#a0a0a0" fill="none"/></g>
<g transform="translate(809,55)"><path d="M3.6 7.2A5.4 5.4 0 1 1 6.5 14" fill="none" stroke="#000" stroke-width="1.3"/><path d="M4.2 5.6A5.4 5.4 0 0 1 13.2 6.4" fill="none" stroke="#808000" stroke-width="1.1"/><path d="M1.5 4.5V10.5H7" stroke="#000" stroke-width="1.6" fill="none"/><path d="M1.8 10.2L5 7" stroke="#000" stroke-width="1.4"/></g>
<g transform="translate(832,55)"><path d="M13.4 7.2A5.4 5.4 0 1 0 10.5 14" fill="none" stroke="#a0a0a0" stroke-width="1.3"/><path d="M15.5 4.5V10.5H10" stroke="#a0a0a0" stroke-width="1.6" fill="none"/><path d="M15.2 10.2L12 7" stroke="#a0a0a0" stroke-width="1.4"/></g>
<g transform="translate(855,55)"><path d="M0.5 7.5H5M0.5 7.5V15.5H5M0.5 11.5H4" stroke="#a0a0a0" stroke-width="1.6" fill="none"/><path d="M8 11H15.5M8 11V14M11.5 11V14M15.5 11V14" stroke="#a0a0a0" stroke-width="1.4" fill="none"/><path d="M2.5 4.5L5.5 1.5H11L13.5 4" stroke="#a0a0a0" stroke-width="1.1" fill="none"/><path d="M11.5 4.5H15L13.5 6.5Z" fill="#a0a0a0"/></g>
<g transform="translate(878,55)"><path d="M0.5 7.5H5M0.5 7.5V15.5H5M0.5 11.5H4" stroke="#a0a0a0" stroke-width="1.6" fill="none"/><path d="M2.5 4.5L5.5 1.5H11" stroke="#a0a0a0" stroke-width="1.1" fill="none"/></g>
</g></svg></body></html>
